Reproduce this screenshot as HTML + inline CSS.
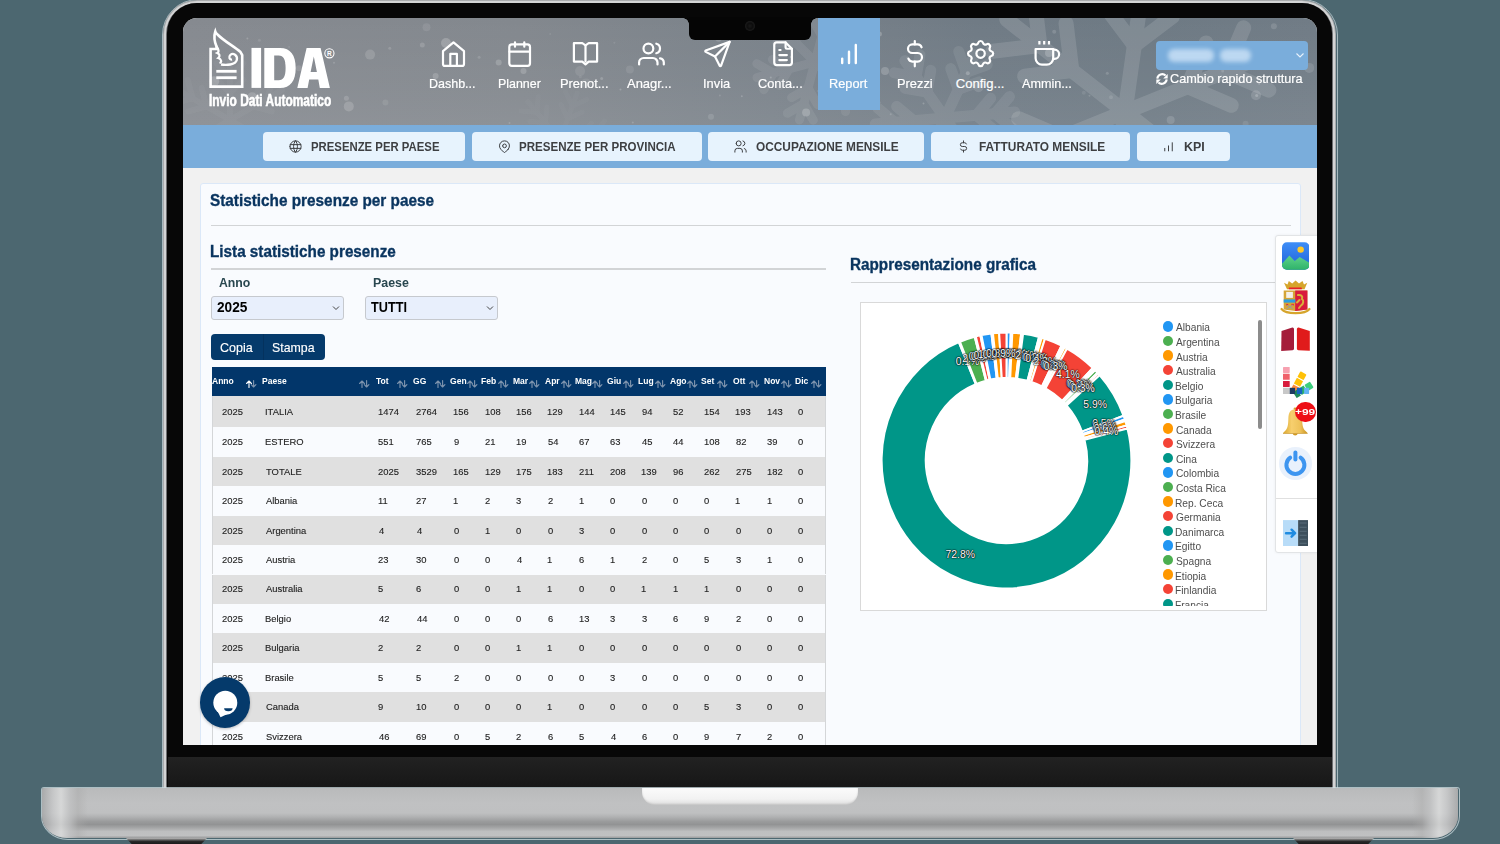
<!DOCTYPE html>
<html><head><meta charset="utf-8">
<style>
*{box-sizing:border-box;margin:0;padding:0}
html,body{width:1500px;height:844px;overflow:hidden}
body{background:#4c6770;position:relative;font-family:"Liberation Sans",sans-serif}
.a{position:absolute}
.t{position:absolute;white-space:nowrap;line-height:1}
</style></head><body>


<div class="a" style="left:161.5px;top:-1.5px;width:1176px;height:792px;border-radius:36px 36px 0 0;border:1px solid rgba(205,220,224,.7)"></div>
<div class="a" style="left:163px;top:0;width:1173px;height:790px;border-radius:34px 34px 0 0;background:#a9abad"></div>
<div class="a" style="left:163.8px;top:0.5px;width:1171.4px;height:790px;border-radius:33px 33px 0 0;background:#d3d4d5"></div>
<div class="a" style="left:166px;top:2.6px;width:1167px;height:790px;border-radius:31px 31px 0 0;background:#6d6e70"></div>
<div class="a" style="left:167px;top:3.4px;width:1165px;height:790px;border-radius:30px 30px 0 0;background:#070707"></div>
<div class="a" style="left:168px;top:757px;width:1164px;height:31px;background:linear-gradient(180deg,#222 0,#1d1d1d 40%,#171717 100%)"></div>


<div class="a" style="left:40.5px;top:786.5px;width:1419px;height:53px;border-radius:3px 3px 27px 27px / 3px 3px 24px 24px;border:1px solid rgba(205,220,224,.75)"></div>
<div class="a" style="left:42px;top:788px;width:1416px;height:50px;border-radius:2px 2px 25px 25px / 2px 2px 22px 22px;
background:linear-gradient(180deg,#b9babb 0,#c0c1c2 30%,#bfc0c1 50%,#b0b1b2 58%,#9a9b9c 67%,#929394 73%,#a6a7a8 80%,#bebfc0 87%,#c0c1c2 95%,#9a9b9c 100%)"></div>
<div class="a" style="left:42px;top:788px;width:1416px;height:50px;border-radius:2px 2px 25px 25px / 2px 2px 22px 22px;
background:linear-gradient(90deg,#a4a5a6 0,#c8c9ca 11px,#dcdddd 19px,#c0c1c2 28px,rgba(170,170,170,.55) 36px,rgba(190,190,190,0) 46px,rgba(190,190,190,0) 1370px,rgba(170,170,170,.55) 1380px,#c0c1c2 1388px,#dcdddd 1397px,#c8c9ca 1405px,#a4a5a6 100%);opacity:.8"></div>
<div class="a" style="left:642px;top:788px;width:216px;height:17px;border-radius:0 0 13px 13px;background:linear-gradient(180deg,#fbfbfb,#f2f2f2 65%,#dcdcdc);box-shadow:inset 0 -1px 2px rgba(0,0,0,.12)"></div>
<div class="a" style="left:126px;top:838px;width:81px;height:6px;background:linear-gradient(180deg,#bdbdbd 0,#5a5a5a 35%,#262626 60%,#1c1c1c);clip-path:polygon(0 0,100% 0,93% 100%,7% 100%)"></div>
<div class="a" style="left:1293px;top:838px;width:81px;height:6px;background:linear-gradient(180deg,#bdbdbd 0,#5a5a5a 35%,#262626 60%,#1c1c1c);clip-path:polygon(0 0,100% 0,93% 100%,7% 100%)"></div>

<div class="a" id="screen" style="left:183px;top:18px;width:1134px;height:727px;overflow:hidden;border-radius:14px 14px 0 0;background:#f1f1f1">
<div class="a" style="left:-183px;top:-18px;width:1500px;height:844px">

<div class="a" style="left:183px;top:18px;width:1134px;height:107px;background:linear-gradient(90deg,#868a90 0%,#83888e 30%,#7a828a 52%,#707b85 70%,#6e7a84 85%,#717c86 100%)"></div>
<div class="a" style="left:183px;top:18px;width:1134px;height:107px;background:linear-gradient(180deg,rgba(255,255,255,0) 0,rgba(255,255,255,.04) 60%,rgba(255,255,255,.08) 100%)"></div>

<svg class="a" style="left:183px;top:18px" width="1134" height="107" viewBox="183 18 1134 107"><g transform="translate(1125,112) rotate(8)" stroke="#fff" opacity="0.12" stroke-width="15" stroke-linecap="round" fill="none"><g transform="rotate(0)"><line x1="0" y1="0" x2="0" y2="-150"/><line x1="0" y1="-67.5" x2="33.60000000000001" y2="-101.10000000000001"/><line x1="0" y1="-67.5" x2="-33.60000000000001" y2="-101.10000000000001"/><line x1="0" y1="-108.0" x2="33.60000000000001" y2="-141.60000000000002"/><line x1="0" y1="-108.0" x2="-33.60000000000001" y2="-141.60000000000002"/></g><g transform="rotate(60)"><line x1="0" y1="0" x2="0" y2="-150"/><line x1="0" y1="-67.5" x2="33.60000000000001" y2="-101.10000000000001"/><line x1="0" y1="-67.5" x2="-33.60000000000001" y2="-101.10000000000001"/><line x1="0" y1="-108.0" x2="33.60000000000001" y2="-141.60000000000002"/><line x1="0" y1="-108.0" x2="-33.60000000000001" y2="-141.60000000000002"/></g><g transform="rotate(120)"><line x1="0" y1="0" x2="0" y2="-150"/><line x1="0" y1="-67.5" x2="33.60000000000001" y2="-101.10000000000001"/><line x1="0" y1="-67.5" x2="-33.60000000000001" y2="-101.10000000000001"/><line x1="0" y1="-108.0" x2="33.60000000000001" y2="-141.60000000000002"/><line x1="0" y1="-108.0" x2="-33.60000000000001" y2="-141.60000000000002"/></g><g transform="rotate(180)"><line x1="0" y1="0" x2="0" y2="-150"/><line x1="0" y1="-67.5" x2="33.60000000000001" y2="-101.10000000000001"/><line x1="0" y1="-67.5" x2="-33.60000000000001" y2="-101.10000000000001"/><line x1="0" y1="-108.0" x2="33.60000000000001" y2="-141.60000000000002"/><line x1="0" y1="-108.0" x2="-33.60000000000001" y2="-141.60000000000002"/></g><g transform="rotate(240)"><line x1="0" y1="0" x2="0" y2="-150"/><line x1="0" y1="-67.5" x2="33.60000000000001" y2="-101.10000000000001"/><line x1="0" y1="-67.5" x2="-33.60000000000001" y2="-101.10000000000001"/><line x1="0" y1="-108.0" x2="33.60000000000001" y2="-141.60000000000002"/><line x1="0" y1="-108.0" x2="-33.60000000000001" y2="-141.60000000000002"/></g><g transform="rotate(300)"><line x1="0" y1="0" x2="0" y2="-150"/><line x1="0" y1="-67.5" x2="33.60000000000001" y2="-101.10000000000001"/><line x1="0" y1="-67.5" x2="-33.60000000000001" y2="-101.10000000000001"/><line x1="0" y1="-108.0" x2="33.60000000000001" y2="-141.60000000000002"/><line x1="0" y1="-108.0" x2="-33.60000000000001" y2="-141.60000000000002"/></g></g><g transform="translate(945,118) rotate(25)" stroke="#fff" opacity="0.08" stroke-width="11" stroke-linecap="round" fill="none"><g transform="rotate(0)"><line x1="0" y1="0" x2="0" y2="-70"/><line x1="0" y1="-31.5" x2="15.680000000000001" y2="-47.18"/><line x1="0" y1="-31.5" x2="-15.680000000000001" y2="-47.18"/><line x1="0" y1="-50.4" x2="15.680000000000001" y2="-66.08"/><line x1="0" y1="-50.4" x2="-15.680000000000001" y2="-66.08"/></g><g transform="rotate(60)"><line x1="0" y1="0" x2="0" y2="-70"/><line x1="0" y1="-31.5" x2="15.680000000000001" y2="-47.18"/><line x1="0" y1="-31.5" x2="-15.680000000000001" y2="-47.18"/><line x1="0" y1="-50.4" x2="15.680000000000001" y2="-66.08"/><line x1="0" y1="-50.4" x2="-15.680000000000001" y2="-66.08"/></g><g transform="rotate(120)"><line x1="0" y1="0" x2="0" y2="-70"/><line x1="0" y1="-31.5" x2="15.680000000000001" y2="-47.18"/><line x1="0" y1="-31.5" x2="-15.680000000000001" y2="-47.18"/><line x1="0" y1="-50.4" x2="15.680000000000001" y2="-66.08"/><line x1="0" y1="-50.4" x2="-15.680000000000001" y2="-66.08"/></g><g transform="rotate(180)"><line x1="0" y1="0" x2="0" y2="-70"/><line x1="0" y1="-31.5" x2="15.680000000000001" y2="-47.18"/><line x1="0" y1="-31.5" x2="-15.680000000000001" y2="-47.18"/><line x1="0" y1="-50.4" x2="15.680000000000001" y2="-66.08"/><line x1="0" y1="-50.4" x2="-15.680000000000001" y2="-66.08"/></g><g transform="rotate(240)"><line x1="0" y1="0" x2="0" y2="-70"/><line x1="0" y1="-31.5" x2="15.680000000000001" y2="-47.18"/><line x1="0" y1="-31.5" x2="-15.680000000000001" y2="-47.18"/><line x1="0" y1="-50.4" x2="15.680000000000001" y2="-66.08"/><line x1="0" y1="-50.4" x2="-15.680000000000001" y2="-66.08"/></g><g transform="rotate(300)"><line x1="0" y1="0" x2="0" y2="-70"/><line x1="0" y1="-31.5" x2="15.680000000000001" y2="-47.18"/><line x1="0" y1="-31.5" x2="-15.680000000000001" y2="-47.18"/><line x1="0" y1="-50.4" x2="15.680000000000001" y2="-66.08"/><line x1="0" y1="-50.4" x2="-15.680000000000001" y2="-66.08"/></g></g><g transform="translate(815,62) rotate(15)" stroke="#fff" opacity="0.07" stroke-width="9" stroke-linecap="round" fill="none"><g transform="rotate(0)"><line x1="0" y1="0" x2="0" y2="-60"/><line x1="0" y1="-27.0" x2="13.440000000000001" y2="-40.44"/><line x1="0" y1="-27.0" x2="-13.440000000000001" y2="-40.44"/><line x1="0" y1="-43.199999999999996" x2="13.440000000000001" y2="-56.64"/><line x1="0" y1="-43.199999999999996" x2="-13.440000000000001" y2="-56.64"/></g><g transform="rotate(60)"><line x1="0" y1="0" x2="0" y2="-60"/><line x1="0" y1="-27.0" x2="13.440000000000001" y2="-40.44"/><line x1="0" y1="-27.0" x2="-13.440000000000001" y2="-40.44"/><line x1="0" y1="-43.199999999999996" x2="13.440000000000001" y2="-56.64"/><line x1="0" y1="-43.199999999999996" x2="-13.440000000000001" y2="-56.64"/></g><g transform="rotate(120)"><line x1="0" y1="0" x2="0" y2="-60"/><line x1="0" y1="-27.0" x2="13.440000000000001" y2="-40.44"/><line x1="0" y1="-27.0" x2="-13.440000000000001" y2="-40.44"/><line x1="0" y1="-43.199999999999996" x2="13.440000000000001" y2="-56.64"/><line x1="0" y1="-43.199999999999996" x2="-13.440000000000001" y2="-56.64"/></g><g transform="rotate(180)"><line x1="0" y1="0" x2="0" y2="-60"/><line x1="0" y1="-27.0" x2="13.440000000000001" y2="-40.44"/><line x1="0" y1="-27.0" x2="-13.440000000000001" y2="-40.44"/><line x1="0" y1="-43.199999999999996" x2="13.440000000000001" y2="-56.64"/><line x1="0" y1="-43.199999999999996" x2="-13.440000000000001" y2="-56.64"/></g><g transform="rotate(240)"><line x1="0" y1="0" x2="0" y2="-60"/><line x1="0" y1="-27.0" x2="13.440000000000001" y2="-40.44"/><line x1="0" y1="-27.0" x2="-13.440000000000001" y2="-40.44"/><line x1="0" y1="-43.199999999999996" x2="13.440000000000001" y2="-56.64"/><line x1="0" y1="-43.199999999999996" x2="-13.440000000000001" y2="-56.64"/></g><g transform="rotate(300)"><line x1="0" y1="0" x2="0" y2="-60"/><line x1="0" y1="-27.0" x2="13.440000000000001" y2="-40.44"/><line x1="0" y1="-27.0" x2="-13.440000000000001" y2="-40.44"/><line x1="0" y1="-43.199999999999996" x2="13.440000000000001" y2="-56.64"/><line x1="0" y1="-43.199999999999996" x2="-13.440000000000001" y2="-56.64"/></g></g><g transform="translate(230,120) rotate(0)" stroke="#fff" opacity="0.03" stroke-width="6" stroke-linecap="round" fill="none"><g transform="rotate(0)"><line x1="0" y1="0" x2="0" y2="-60"/><line x1="0" y1="-27.0" x2="13.440000000000001" y2="-40.44"/><line x1="0" y1="-27.0" x2="-13.440000000000001" y2="-40.44"/><line x1="0" y1="-43.199999999999996" x2="13.440000000000001" y2="-56.64"/><line x1="0" y1="-43.199999999999996" x2="-13.440000000000001" y2="-56.64"/></g><g transform="rotate(60)"><line x1="0" y1="0" x2="0" y2="-60"/><line x1="0" y1="-27.0" x2="13.440000000000001" y2="-40.44"/><line x1="0" y1="-27.0" x2="-13.440000000000001" y2="-40.44"/><line x1="0" y1="-43.199999999999996" x2="13.440000000000001" y2="-56.64"/><line x1="0" y1="-43.199999999999996" x2="-13.440000000000001" y2="-56.64"/></g><g transform="rotate(120)"><line x1="0" y1="0" x2="0" y2="-60"/><line x1="0" y1="-27.0" x2="13.440000000000001" y2="-40.44"/><line x1="0" y1="-27.0" x2="-13.440000000000001" y2="-40.44"/><line x1="0" y1="-43.199999999999996" x2="13.440000000000001" y2="-56.64"/><line x1="0" y1="-43.199999999999996" x2="-13.440000000000001" y2="-56.64"/></g><g transform="rotate(180)"><line x1="0" y1="0" x2="0" y2="-60"/><line x1="0" y1="-27.0" x2="13.440000000000001" y2="-40.44"/><line x1="0" y1="-27.0" x2="-13.440000000000001" y2="-40.44"/><line x1="0" y1="-43.199999999999996" x2="13.440000000000001" y2="-56.64"/><line x1="0" y1="-43.199999999999996" x2="-13.440000000000001" y2="-56.64"/></g><g transform="rotate(240)"><line x1="0" y1="0" x2="0" y2="-60"/><line x1="0" y1="-27.0" x2="13.440000000000001" y2="-40.44"/><line x1="0" y1="-27.0" x2="-13.440000000000001" y2="-40.44"/><line x1="0" y1="-43.199999999999996" x2="13.440000000000001" y2="-56.64"/><line x1="0" y1="-43.199999999999996" x2="-13.440000000000001" y2="-56.64"/></g><g transform="rotate(300)"><line x1="0" y1="0" x2="0" y2="-60"/><line x1="0" y1="-27.0" x2="13.440000000000001" y2="-40.44"/><line x1="0" y1="-27.0" x2="-13.440000000000001" y2="-40.44"/><line x1="0" y1="-43.199999999999996" x2="13.440000000000001" y2="-56.64"/><line x1="0" y1="-43.199999999999996" x2="-13.440000000000001" y2="-56.64"/></g></g><g transform="translate(560,140) rotate(20)" stroke="#fff" opacity="0.025" stroke-width="5" stroke-linecap="round" fill="none"><g transform="rotate(0)"><line x1="0" y1="0" x2="0" y2="-50"/><line x1="0" y1="-22.5" x2="11.200000000000003" y2="-33.7"/><line x1="0" y1="-22.5" x2="-11.200000000000003" y2="-33.7"/><line x1="0" y1="-36.0" x2="11.200000000000003" y2="-47.2"/><line x1="0" y1="-36.0" x2="-11.200000000000003" y2="-47.2"/></g><g transform="rotate(60)"><line x1="0" y1="0" x2="0" y2="-50"/><line x1="0" y1="-22.5" x2="11.200000000000003" y2="-33.7"/><line x1="0" y1="-22.5" x2="-11.200000000000003" y2="-33.7"/><line x1="0" y1="-36.0" x2="11.200000000000003" y2="-47.2"/><line x1="0" y1="-36.0" x2="-11.200000000000003" y2="-47.2"/></g><g transform="rotate(120)"><line x1="0" y1="0" x2="0" y2="-50"/><line x1="0" y1="-22.5" x2="11.200000000000003" y2="-33.7"/><line x1="0" y1="-22.5" x2="-11.200000000000003" y2="-33.7"/><line x1="0" y1="-36.0" x2="11.200000000000003" y2="-47.2"/><line x1="0" y1="-36.0" x2="-11.200000000000003" y2="-47.2"/></g><g transform="rotate(180)"><line x1="0" y1="0" x2="0" y2="-50"/><line x1="0" y1="-22.5" x2="11.200000000000003" y2="-33.7"/><line x1="0" y1="-22.5" x2="-11.200000000000003" y2="-33.7"/><line x1="0" y1="-36.0" x2="11.200000000000003" y2="-47.2"/><line x1="0" y1="-36.0" x2="-11.200000000000003" y2="-47.2"/></g><g transform="rotate(240)"><line x1="0" y1="0" x2="0" y2="-50"/><line x1="0" y1="-22.5" x2="11.200000000000003" y2="-33.7"/><line x1="0" y1="-22.5" x2="-11.200000000000003" y2="-33.7"/><line x1="0" y1="-36.0" x2="11.200000000000003" y2="-47.2"/><line x1="0" y1="-36.0" x2="-11.200000000000003" y2="-47.2"/></g><g transform="rotate(300)"><line x1="0" y1="0" x2="0" y2="-50"/><line x1="0" y1="-22.5" x2="11.200000000000003" y2="-33.7"/><line x1="0" y1="-22.5" x2="-11.200000000000003" y2="-33.7"/><line x1="0" y1="-36.0" x2="11.200000000000003" y2="-47.2"/><line x1="0" y1="-36.0" x2="-11.200000000000003" y2="-47.2"/></g></g><circle cx="550.2" cy="34.1" r="1" fill="rgba(255,255,255,0.09)"/><circle cx="790.7" cy="57.1" r="1" fill="rgba(255,255,255,0.21)"/><circle cx="426.5" cy="27.2" r="4" fill="rgba(255,255,255,0.09)"/><circle cx="285.9" cy="63.4" r="1" fill="rgba(255,255,255,0.21)"/><circle cx="898.1" cy="80.4" r="1" fill="rgba(255,255,255,0.16)"/><circle cx="632.8" cy="122.5" r="1" fill="rgba(255,255,255,0.16)"/><circle cx="334.0" cy="62.8" r="1" fill="rgba(255,255,255,0.16)"/><circle cx="818.3" cy="91.0" r="1" fill="rgba(255,255,255,0.16)"/><circle cx="907.5" cy="57.8" r="1" fill="rgba(255,255,255,0.16)"/><circle cx="885.0" cy="71.1" r="4" fill="rgba(255,255,255,0.19)"/><circle cx="711.0" cy="116.8" r="3" fill="rgba(255,255,255,0.12)"/><circle cx="1083.8" cy="92.8" r="2" fill="rgba(255,255,255,0.09)"/><circle cx="523.5" cy="71.0" r="3" fill="rgba(255,255,255,0.18)"/><circle cx="509.5" cy="122.9" r="1" fill="rgba(255,255,255,0.15)"/><circle cx="370.1" cy="54.6" r="5" fill="rgba(255,255,255,0.14)"/><circle cx="1273.9" cy="26.3" r="3" fill="rgba(255,255,255,0.13)"/><circle cx="580.1" cy="71.1" r="5" fill="rgba(255,255,255,0.09)"/><circle cx="289.1" cy="46.9" r="1" fill="rgba(255,255,255,0.09)"/><circle cx="978.5" cy="87.2" r="5" fill="rgba(255,255,255,0.12)"/><circle cx="620.5" cy="89.5" r="1" fill="rgba(255,255,255,0.21)"/><circle cx="586.1" cy="83.4" r="5" fill="rgba(255,255,255,0.09)"/><circle cx="1054.2" cy="31.8" r="2" fill="rgba(255,255,255,0.14)"/><circle cx="1222.7" cy="71.1" r="1.5" fill="rgba(255,255,255,0.14)"/><circle cx="806.1" cy="112.5" r="4" fill="rgba(255,255,255,0.20)"/><circle cx="498.7" cy="62.4" r="3" fill="rgba(255,255,255,0.18)"/><circle cx="614.4" cy="42.7" r="1" fill="rgba(255,255,255,0.10)"/><circle cx="446.0" cy="43.0" r="5" fill="rgba(255,255,255,0.20)"/><circle cx="389.8" cy="48.2" r="1.5" fill="rgba(255,255,255,0.14)"/><circle cx="601.7" cy="78.6" r="1.5" fill="rgba(255,255,255,0.18)"/><circle cx="767.6" cy="84.1" r="1" fill="rgba(255,255,255,0.14)"/><circle cx="1170.7" cy="119.9" r="4" fill="rgba(255,255,255,0.14)"/><circle cx="629.9" cy="69.5" r="4" fill="rgba(255,255,255,0.09)"/><circle cx="259.4" cy="40.3" r="1.5" fill="rgba(255,255,255,0.10)"/><circle cx="864.2" cy="29.0" r="1.5" fill="rgba(255,255,255,0.16)"/><circle cx="1259.1" cy="83.7" r="1" fill="rgba(255,255,255,0.20)"/><circle cx="879.4" cy="33.9" r="2.5" fill="rgba(255,255,255,0.21)"/><circle cx="866.0" cy="68.7" r="1" fill="rgba(255,255,255,0.20)"/><circle cx="1309.2" cy="67.9" r="5" fill="rgba(255,255,255,0.12)"/><circle cx="346.4" cy="98.2" r="2.5" fill="rgba(255,255,255,0.15)"/><circle cx="967.8" cy="73.2" r="2" fill="rgba(255,255,255,0.21)"/><circle cx="782.0" cy="33.7" r="1" fill="rgba(255,255,255,0.19)"/><circle cx="521.0" cy="86.8" r="1" fill="rgba(255,255,255,0.18)"/><circle cx="479.1" cy="57.2" r="1.5" fill="rgba(255,255,255,0.13)"/><circle cx="435.6" cy="75.9" r="3" fill="rgba(255,255,255,0.17)"/><circle cx="878.4" cy="102.4" r="2" fill="rgba(255,255,255,0.19)"/><circle cx="1111.0" cy="97.2" r="2" fill="rgba(255,255,255,0.11)"/><circle cx="741.8" cy="96.2" r="1" fill="rgba(255,255,255,0.19)"/><circle cx="718.5" cy="38.7" r="3" fill="rgba(255,255,255,0.14)"/><circle cx="1245.6" cy="123.7" r="3" fill="rgba(255,255,255,0.09)"/><circle cx="298.8" cy="68.3" r="3" fill="rgba(255,255,255,0.11)"/><circle cx="890.7" cy="114.3" r="1" fill="rgba(255,255,255,0.15)"/><circle cx="923.5" cy="103.6" r="1" fill="rgba(255,255,255,0.20)"/><circle cx="319.0" cy="59.6" r="2" fill="rgba(255,255,255,0.15)"/><circle cx="385.4" cy="102.4" r="3" fill="rgba(255,255,255,0.09)"/><circle cx="1256.0" cy="95.2" r="5" fill="rgba(255,255,255,0.14)"/><circle cx="1256.7" cy="95.6" r="1.5" fill="rgba(255,255,255,0.22)"/><circle cx="214.2" cy="81.2" r="5" fill="rgba(255,255,255,0.19)"/><circle cx="348.8" cy="106.4" r="5" fill="rgba(255,255,255,0.17)"/><circle cx="580.4" cy="76.7" r="1.5" fill="rgba(255,255,255,0.08)"/><circle cx="1089.5" cy="95.7" r="1" fill="rgba(255,255,255,0.15)"/><circle cx="1241.7" cy="64.4" r="2" fill="rgba(255,255,255,0.20)"/><circle cx="422.3" cy="44.9" r="2.5" fill="rgba(255,255,255,0.15)"/><circle cx="1049.0" cy="52.9" r="4" fill="rgba(255,255,255,0.20)"/><circle cx="252.1" cy="97.2" r="5" fill="rgba(255,255,255,0.17)"/><circle cx="1107.3" cy="73.3" r="1.5" fill="rgba(255,255,255,0.15)"/><circle cx="776.7" cy="20.0" r="5" fill="rgba(255,255,255,0.19)"/><circle cx="873.1" cy="101.0" r="1.5" fill="rgba(255,255,255,0.10)"/><circle cx="719.9" cy="95.6" r="1" fill="rgba(255,255,255,0.13)"/><circle cx="770.8" cy="77.4" r="1" fill="rgba(255,255,255,0.20)"/><circle cx="247.4" cy="38.5" r="1" fill="rgba(255,255,255,0.19)"/></svg>

<svg class="a" style="left:183px;top:18px" width="200" height="107" viewBox="183 18 200 107">
 <g fill="none" stroke="#fff" stroke-width="2.6" stroke-linejoin="miter">
  <path d="M210.6,49 L210.6,86.6 L242.2,86.6 L242.2,55 L240.5,52 C234,46.5 224,41 218,35 C216.2,33.2 215.6,32.5 215.3,31.5 C213.8,36 214.2,41 216.5,46.5 L216.6,49 Z"/>
  <path d="M216.2,46 C218.5,49 219.5,52 217.3,53 C219.5,54 220.6,56 218.2,58 C221,59 222.6,62 219.5,63" stroke-width="2.2"/>
  <path d="M221,64.5 C226,65.5 235.5,65 236.8,60 C238,55 233,52.5 230.3,55 C228.3,57 229.5,60 232,59.5" stroke-width="2.3"/>
 </g>
 <g fill="#fff">
  <rect x="216.3" y="69.9" width="20.3" height="2.8"/>
  <rect x="216.3" y="76.3" width="20.3" height="2.8"/>
  <rect x="251.5" y="47.9" width="9.6" height="40"/>
  <path fill-rule="evenodd" d="M264.3,47.9 H280 C290.5,47.9 295.7,55 295.7,67.9 C295.7,80.8 290.5,87.9 280,87.9 H264.3 Z M274.2,55.6 H278.6 C283.6,55.6 285.6,59.5 285.6,67.9 C285.6,76.3 283.6,80.2 278.6,80.2 H274.2 Z"/>
  <path fill-rule="evenodd" d="M297.3,87.9 L306.6,47.9 H320.6 L329.9,87.9 H319.8 L318.3,79.5 H309.2 L307.6,87.9 Z M310.6,71.9 H316.9 L313.8,56.5 Z"/>
 </g>
 <circle cx="329.4" cy="53.3" r="4.6" fill="none" stroke="#fff" stroke-width="1.1"/>
 <text x="329.4" y="55.9" font-family="Liberation Sans" font-weight="bold" font-size="6.5" fill="#fff" text-anchor="middle">R</text>
</svg>

<div class="t" style="left:208.62px;top:92.00px;font-size:16.23px;font-weight:bold;color:#fff;transform-origin:0 0;transform:scaleX(0.7355);-webkit-text-stroke:0.6px #fff;">Invio Dati Automatico</div>


<div class="a" style="left:818px;top:18px;width:62px;height:91.5px;background:#7aaddb"></div>
<svg class="a" style="left:0;top:0" width="1500" height="130" viewBox="0 0 1500 130" fill="none" stroke="#fff" stroke-width="2.2" stroke-linecap="round" stroke-linejoin="round">
<path d="M443,51.2 L453.5,42.3 L464,51.2 V63.9 a2,2 0 0 1 -2,2 H445 a2,2 0 0 1 -2,-2 Z"/><path d="M450.3,65.6 V53.9 H456.9 V65.6"/>
<rect x="509.3" y="44.3" width="20.7" height="21.6" rx="2.6"/><path d="M515 42.3v4.4M524.3 42.3v4.4M509.5 51.7h20.3"/>
<path d="M573.9,43.2 H582.3 L585.5,45.3 L588.7,43.2 H597.1 V61.6 H588.7 L585.5,64.4 L582.3,61.6 H573.9 Z"/><path d="M585.5,45.5 V61.4"/>
<circle cx="648.4" cy="48.5" r="4.9"/><path d="M639.1,64.4 V62.6 a4.6,4.6 0 0 1 4.6,-4.6 h9.2 a4.6,4.6 0 0 1 4.6,4.6 v1.8"/><path d="M656.3,43.7 a4.9,4.9 0 0 1 0,9.5"/><path d="M660,58.3 a4.4,4.4 0 0 1 3.8,4.3 v1.8"/>
<g transform="translate(701.7,37.9) scale(1.33)" stroke-width="1.65"><path d="M10 14l11 -11"/><path d="M21 3l-6.5 18a.55 .55 0 0 1 -1 0l-3.5 -7l-7 -3.5a.55 .55 0 0 1 0 -1l18 -6.5"/></g>
<g transform="translate(767.96,38.68) scale(1.26)" stroke-width="1.75"><path d="M14 3v4a1 1 0 0 0 1 1h4"/><path d="M17 21h-10a2 2 0 0 1 -2 -2v-14a2 2 0 0 1 2 -2h7l5 5v11a2 2 0 0 1 -2 2z"/><path d="M9 9l1 0"/><path d="M9 13l6 0"/><path d="M9 17l6 0"/></g>
<path d="M842.2,63 V58.6 M849,63 V51.8 M855.8,63 V45" stroke-width="2.4"/>
<path d="M921.6,47.3 a4.3,4.3 0 0 0 -3.9,-2.9 h-5.4 a4.3,4.3 0 0 0 0,8.6 h5.4 a4.3,4.3 0 0 1 0,8.6 h-5.4 a4.3,4.3 0 0 1 -3.9,-2.9"/><path d="M914.8,41.1 v3.3 M914.8,61.6 v4.7"/>
<g transform="translate(963.8,36.8) scale(1.4)" stroke-width="1.57"><path d="M10.325 4.317c.426 -1.756 2.924 -1.756 3.35 0a1.724 1.724 0 0 0 2.573 1.066c1.543 -.94 3.31 .826 2.37 2.37a1.724 1.724 0 0 0 1.065 2.572c1.756 .426 1.756 2.924 0 3.35a1.724 1.724 0 0 0 -1.066 2.573c.94 1.543 -.826 3.31 -2.37 2.37a1.724 1.724 0 0 0 -2.572 1.065c-.426 1.756 -2.924 1.756 -3.35 0a1.724 1.724 0 0 0 -2.573 -1.066c-1.543 .94 -3.31 -.826 -2.37 -2.37a1.724 1.724 0 0 0 -1.065 -2.572c-1.756 -.426 -1.756 -2.924 0 -3.35a1.724 1.724 0 0 0 1.066 -2.573c-.94 -1.543 .826 -3.31 2.37 -2.37c1 .608 2.296 .07 2.572 -1.065z"/><path d="M9 12a3 3 0 1 0 6 0a3 3 0 0 0 -6 0"/></g>
<path d="M1035.6,49 H1053.2 V58.2 a6.4,6.4 0 0 1 -6.4,6.4 h-4.8 a6.4,6.4 0 0 1 -6.4,-6.4 Z"/><path d="M1053.2,49.6 h1.3 a4.6,4.6 0 0 1 0,9.2 h-1.3"/><path d="M1039.4 41v3.6M1044.2 41v3.6M1049 41v3.6" stroke-width="2.2" stroke-linecap="butt"/>
</svg>
<div class="t" style="left:428.80px;top:76.91px;font-size:13.04px;font-weight:normal;color:#fff;transform-origin:0 0;transform:scaleX(0.9589);-webkit-text-stroke:0.2px #fff;">Dashb...</div>
<div class="t" style="left:498.01px;top:76.91px;font-size:13.04px;font-weight:normal;color:#fff;transform-origin:0 0;transform:scaleX(0.9520);-webkit-text-stroke:0.2px #fff;">Planner</div>
<div class="t" style="left:560.17px;top:76.91px;font-size:13.04px;font-weight:normal;color:#fff;transform-origin:0 0;transform:scaleX(0.9847);-webkit-text-stroke:0.2px #fff;">Prenot...</div>
<div class="t" style="left:626.90px;top:76.91px;font-size:13.04px;font-weight:normal;color:#fff;transform-origin:0 0;transform:scaleX(0.9940);-webkit-text-stroke:0.2px #fff;">Anagr...</div>
<div class="t" style="left:703.14px;top:76.91px;font-size:13.04px;font-weight:normal;color:#fff;transform-origin:0 0;transform:scaleX(0.9868);-webkit-text-stroke:0.2px #fff;">Invia</div>
<div class="t" style="left:758.26px;top:76.91px;font-size:13.04px;font-weight:normal;color:#fff;transform-origin:0 0;transform:scaleX(0.9789);-webkit-text-stroke:0.2px #fff;">Conta...</div>
<div class="t" style="left:829.38px;top:76.91px;font-size:13.04px;font-weight:normal;color:#fff;transform-origin:0 0;transform:scaleX(0.9784);-webkit-text-stroke:0.2px #fff;">Report</div>
<div class="t" style="left:896.97px;top:76.91px;font-size:13.04px;font-weight:normal;color:#fff;transform-origin:0 0;transform:scaleX(0.9853);-webkit-text-stroke:0.2px #fff;">Prezzi</div>
<div class="t" style="left:955.85px;top:76.91px;font-size:13.04px;font-weight:normal;color:#fff;transform-origin:0 0;-webkit-text-stroke:0.2px #fff;">Config...</div>
<div class="t" style="left:1022.30px;top:76.91px;font-size:13.04px;font-weight:normal;color:#fff;transform-origin:0 0;transform:scaleX(0.9698);-webkit-text-stroke:0.2px #fff;">Ammin...</div>

<div class="a" style="left:1156px;top:40.6px;width:152px;height:29px;border-radius:4px;background:#7aaddb"></div>
<div class="a" style="left:1168px;top:48.5px;width:46px;height:13px;border-radius:6px;background:rgba(205,226,246,.8);filter:blur(2px)"></div><div class="a" style="left:1220px;top:48.5px;width:31px;height:13px;border-radius:6px;background:rgba(205,226,246,.8);filter:blur(2px)"></div>
<svg class="a" style="left:1295px;top:51px" width="10" height="8" viewBox="0 0 10 8"><path d="M1.5 2.5l3.5 3.5l3.5-3.5" fill="none" stroke="#e8f2fb" stroke-width="1.1"/></svg>
<svg class="a" style="left:1155px;top:72px" width="14" height="14" viewBox="0 0 14 14"><path d="M2.3,6.6 A4.9,4.9 0 0 1 10.6,3.6" stroke="#fff" stroke-width="2.1" fill="none"/><path d="M8.2,6.6 H12.7 V2.1 Z" fill="#fff"/><path d="M11.7,7.4 A4.9,4.9 0 0 1 3.4,10.4" stroke="#fff" stroke-width="2.1" fill="none"/><path d="M5.8,7.4 H1.3 V11.9 Z" fill="#fff"/></svg>

<div class="t" style="left:1170.37px;top:72.31px;font-size:13.04px;font-weight:normal;color:#fff;transform-origin:0 0;transform:scaleX(0.9731);-webkit-text-stroke:0.2px #fff;">Cambio rapido struttura</div>


<div class="a" style="left:183px;top:124.5px;width:1134px;height:43.5px;background:#7aaddb"></div>
<div class="a" style="left:263px;top:132.2px;width:202px;height:28.4px;border-radius:4px;background:#e7f3fd"></div>
<svg class="a" style="left:287.5px;top:139px" width="15" height="15" viewBox="0 0 24 24" fill="none" stroke="#3d3f42" stroke-width="1.6" stroke-linecap="round" stroke-linejoin="round"><path d="M3 12a9 9 0 1 0 18 0a9 9 0 0 0 -18 0"/><path d="M3.6 9h16.8"/><path d="M3.6 15h16.8"/><path d="M11.5 3a17 17 0 0 0 0 18"/><path d="M12.5 3a17 17 0 0 1 0 18"/></svg>
<div class="t" style="left:310.76px;top:139.79px;font-size:13.19px;font-weight:bold;color:#3d3f42;transform-origin:0 0;transform:scaleX(0.8607);">PRESENZE PER PAESE</div>
<div class="a" style="left:472px;top:132.2px;width:230px;height:28.4px;border-radius:4px;background:#e7f3fd"></div>
<svg class="a" style="left:496.5px;top:139px" width="15" height="15" viewBox="0 0 24 24" fill="none" stroke="#3d3f42" stroke-width="1.6" stroke-linecap="round" stroke-linejoin="round"><path d="M9 11a3 3 0 1 0 6 0a3 3 0 0 0 -6 0"/><path d="M17.657 16.657l-4.243 4.243a2 2 0 0 1 -2.827 0l-4.244 -4.243a8 8 0 1 1 11.314 0z"/></svg>
<div class="t" style="left:519.25px;top:139.79px;font-size:13.19px;font-weight:bold;color:#3d3f42;transform-origin:0 0;transform:scaleX(0.8762);">PRESENZE PER PROVINCIA</div>
<div class="a" style="left:708px;top:132.2px;width:216px;height:28.4px;border-radius:4px;background:#e7f3fd"></div>
<svg class="a" style="left:732.5px;top:139px" width="15" height="15" viewBox="0 0 24 24" fill="none" stroke="#3d3f42" stroke-width="1.6" stroke-linecap="round" stroke-linejoin="round"><path d="M5 7a4 4 0 1 0 8 0a4 4 0 1 0 -8 0"/><path d="M3 21v-2a4 4 0 0 1 4 -4h4a4 4 0 0 1 4 4v2"/><path d="M16 3.13a4 4 0 0 1 0 7.75"/><path d="M21 21v-2a4 4 0 0 0 -3 -3.85"/></svg>
<div class="t" style="left:756.43px;top:139.79px;font-size:13.19px;font-weight:bold;color:#3d3f42;transform-origin:0 0;transform:scaleX(0.8990);">OCCUPAZIONE MENSILE</div>
<div class="a" style="left:931px;top:132.2px;width:199px;height:28.4px;border-radius:4px;background:#e7f3fd"></div>
<svg class="a" style="left:955.5px;top:139px" width="15" height="15" viewBox="0 0 24 24" fill="none" stroke="#3d3f42" stroke-width="1.6" stroke-linecap="round" stroke-linejoin="round"><path d="M16.7 8a3 3 0 0 0 -2.7 -2h-4a3 3 0 0 0 0 6h4a3 3 0 0 1 0 6h-4a3 3 0 0 1 -2.7 -2"/><path d="M12 3v3m0 12v3"/></svg>
<div class="t" style="left:978.53px;top:139.79px;font-size:13.19px;font-weight:bold;color:#3d3f42;transform-origin:0 0;transform:scaleX(0.9018);">FATTURATO MENSILE</div>
<div class="a" style="left:1137px;top:132.2px;width:93px;height:28.4px;border-radius:4px;background:#e7f3fd"></div>
<svg class="a" style="left:1160.5px;top:139px" width="15" height="15" viewBox="0 0 24 24" fill="none" stroke="#3d3f42" stroke-width="1.6" stroke-linecap="round" stroke-linejoin="round"><path d="M6 19v-4"/><path d="M12 19v-8"/><path d="M18 19v-13"/></svg>
<div class="t" style="left:1184.09px;top:139.79px;font-size:13.19px;font-weight:bold;color:#3d3f42;transform-origin:0 0;transform:scaleX(0.9435);">KPI</div>
<div class="a" style="left:200px;top:182.5px;width:1101px;height:600px;border-radius:3px;background:#f9fbfe;border:1px solid #dbe8f8"></div>
<div class="t" style="left:210.14px;top:192.08px;font-size:16.38px;font-weight:bold;color:#09345f;transform-origin:0 0;transform:scaleX(0.9367);-webkit-text-stroke:0.35px #09345f;">Statistiche presenze per paese</div>
<div class="a" style="left:211px;top:224.5px;width:1080px;height:1.5px;background:#d2d4d6"></div>
<div class="t" style="left:209.61px;top:243.30px;font-size:16.23px;font-weight:bold;color:#09345f;transform-origin:0 0;transform:scaleX(0.9412);-webkit-text-stroke:0.35px #09345f;">Lista statistiche presenze</div>
<div class="a" style="left:211px;top:268px;width:615px;height:1.5px;background:#d2d4d6"></div>
<div class="t" style="left:850.41px;top:257.45px;font-size:15.94px;font-weight:bold;color:#09345f;transform-origin:0 0;transform:scaleX(0.9589);-webkit-text-stroke:0.35px #09345f;">Rappresentazione grafica</div>
<div class="a" style="left:851px;top:281.7px;width:440px;height:1.5px;background:#d2d4d6"></div>
<div class="t" style="left:219.09px;top:276.31px;font-size:13.04px;font-weight:bold;color:#29474f;transform-origin:0 0;transform:scaleX(0.9422);">Anno</div>
<div class="t" style="left:372.59px;top:276.31px;font-size:13.04px;font-weight:bold;color:#29474f;transform-origin:0 0;transform:scaleX(0.9508);">Paese</div>
<div class="a" style="left:211px;top:296px;width:133.39999999999998px;height:23.6px;border-radius:3px;background:#e8effc;border:1px solid #c6c9ce"></div>
<div class="t" style="left:216.52px;top:300.77px;font-size:13.91px;font-weight:bold;color:#000;transform-origin:0 0;transform:scaleX(0.9827);">2025</div>
<svg class="a" style="left:332.4px;top:304.5px" width="8" height="6" viewBox="0 0 8 6"><path d="M1 1.5l3 3l3-3" fill="none" stroke="#444" stroke-width="1"/></svg>
<div class="a" style="left:365px;top:296px;width:133px;height:23.6px;border-radius:3px;background:#e8effc;border:1px solid #c6c9ce"></div>
<div class="t" style="left:370.87px;top:300.77px;font-size:13.91px;font-weight:bold;color:#000;transform-origin:0 0;transform:scaleX(0.9131);">TUTTI</div>
<svg class="a" style="left:486px;top:304.5px" width="8" height="6" viewBox="0 0 8 6"><path d="M1 1.5l3 3l3-3" fill="none" stroke="#444" stroke-width="1"/></svg>
<div class="a" style="left:211px;top:334px;width:114.4px;height:26.4px;border-radius:4px;background:#053a6b"></div>
<div class="a" style="left:263px;top:334px;width:1px;height:26.4px;background:rgba(0,0,0,.12)"></div>
<div class="t" style="left:220.38px;top:341.02px;font-size:13.62px;font-weight:normal;color:#fff;transform-origin:0 0;transform:scaleX(0.9176);-webkit-text-stroke:0.15px #fff;">Copia</div>
<div class="t" style="left:272.44px;top:341.02px;font-size:13.62px;font-weight:normal;color:#fff;transform-origin:0 0;transform:scaleX(0.9068);-webkit-text-stroke:0.15px #fff;">Stampa</div>
<div class="a" style="left:211.6px;top:366.6px;width:614.4px;height:29.3px;background:#02366a"></div>
<div class="t" style="left:212.39px;top:376.15px;font-size:9.71px;font-weight:bold;color:#fff;transform-origin:0 0;transform:scaleX(0.8791);">Anno</div>
<svg class="a" style="left:246px;top:379.6px" width="11" height="8" viewBox="0 0 11 8" fill="none" stroke-width="1.15" stroke-linecap="round" stroke-linejoin="round"><path d="M3 7.4V1M0.6 3.5L3 1L5.4 3.5" stroke="#ffffff"/><path d="M7.6 0.6V7M5.3 4.6L7.6 7L9.9 4.6" stroke="#7d93ad"/></svg>
<div class="t" style="left:261.85px;top:376.15px;font-size:9.71px;font-weight:bold;color:#fff;transform-origin:0 0;transform:scaleX(0.8791);">Paese</div>
<svg class="a" style="left:359px;top:379.6px" width="11" height="8" viewBox="0 0 11 8" fill="none" stroke-width="1.15" stroke-linecap="round" stroke-linejoin="round"><path d="M3 7.4V1M0.6 3.5L3 1L5.4 3.5" stroke="#7d93ad"/><path d="M7.6 0.6V7M5.3 4.6L7.6 7L9.9 4.6" stroke="#7d93ad"/></svg>
<div class="t" style="left:375.71px;top:376.15px;font-size:9.71px;font-weight:bold;color:#fff;transform-origin:0 0;transform:scaleX(0.8791);">Tot</div>
<svg class="a" style="left:397px;top:379.6px" width="11" height="8" viewBox="0 0 11 8" fill="none" stroke-width="1.15" stroke-linecap="round" stroke-linejoin="round"><path d="M3 7.4V1M0.6 3.5L3 1L5.4 3.5" stroke="#7d93ad"/><path d="M7.6 0.6V7M5.3 4.6L7.6 7L9.9 4.6" stroke="#7d93ad"/></svg>
<div class="t" style="left:412.66px;top:376.15px;font-size:9.71px;font-weight:bold;color:#fff;transform-origin:0 0;transform:scaleX(0.8791);">GG</div>
<svg class="a" style="left:435px;top:379.6px" width="11" height="8" viewBox="0 0 11 8" fill="none" stroke-width="1.15" stroke-linecap="round" stroke-linejoin="round"><path d="M3 7.4V1M0.6 3.5L3 1L5.4 3.5" stroke="#7d93ad"/><path d="M7.6 0.6V7M5.3 4.6L7.6 7L9.9 4.6" stroke="#7d93ad"/></svg>
<div class="t" style="left:450.36px;top:376.15px;font-size:9.71px;font-weight:bold;color:#fff;transform-origin:0 0;transform:scaleX(0.8791);">Gen</div>
<svg class="a" style="left:467px;top:379.6px" width="11" height="8" viewBox="0 0 11 8" fill="none" stroke-width="1.15" stroke-linecap="round" stroke-linejoin="round"><path d="M3 7.4V1M0.6 3.5L3 1L5.4 3.5" stroke="#7d93ad"/><path d="M7.6 0.6V7M5.3 4.6L7.6 7L9.9 4.6" stroke="#7d93ad"/></svg>
<div class="t" style="left:481.45px;top:376.15px;font-size:9.71px;font-weight:bold;color:#fff;transform-origin:0 0;transform:scaleX(0.8791);">Feb</div>
<svg class="a" style="left:498px;top:379.6px" width="11" height="8" viewBox="0 0 11 8" fill="none" stroke-width="1.15" stroke-linecap="round" stroke-linejoin="round"><path d="M3 7.4V1M0.6 3.5L3 1L5.4 3.5" stroke="#7d93ad"/><path d="M7.6 0.6V7M5.3 4.6L7.6 7L9.9 4.6" stroke="#7d93ad"/></svg>
<div class="t" style="left:512.75px;top:376.15px;font-size:9.71px;font-weight:bold;color:#fff;transform-origin:0 0;transform:scaleX(0.8791);">Mar</div>
<svg class="a" style="left:529.3px;top:379.6px" width="11" height="8" viewBox="0 0 11 8" fill="none" stroke-width="1.15" stroke-linecap="round" stroke-linejoin="round"><path d="M3 7.4V1M0.6 3.5L3 1L5.4 3.5" stroke="#7d93ad"/><path d="M7.6 0.6V7M5.3 4.6L7.6 7L9.9 4.6" stroke="#7d93ad"/></svg>
<div class="t" style="left:544.79px;top:376.15px;font-size:9.71px;font-weight:bold;color:#fff;transform-origin:0 0;transform:scaleX(0.8791);">Apr</div>
<svg class="a" style="left:560.7px;top:379.6px" width="11" height="8" viewBox="0 0 11 8" fill="none" stroke-width="1.15" stroke-linecap="round" stroke-linejoin="round"><path d="M3 7.4V1M0.6 3.5L3 1L5.4 3.5" stroke="#7d93ad"/><path d="M7.6 0.6V7M5.3 4.6L7.6 7L9.9 4.6" stroke="#7d93ad"/></svg>
<div class="t" style="left:575.45px;top:376.15px;font-size:9.71px;font-weight:bold;color:#fff;transform-origin:0 0;transform:scaleX(0.8791);">Mag</div>
<svg class="a" style="left:592px;top:379.6px" width="11" height="8" viewBox="0 0 11 8" fill="none" stroke-width="1.15" stroke-linecap="round" stroke-linejoin="round"><path d="M3 7.4V1M0.6 3.5L3 1L5.4 3.5" stroke="#7d93ad"/><path d="M7.6 0.6V7M5.3 4.6L7.6 7L9.9 4.6" stroke="#7d93ad"/></svg>
<div class="t" style="left:607.26px;top:376.15px;font-size:9.71px;font-weight:bold;color:#fff;transform-origin:0 0;transform:scaleX(0.8791);">Giu</div>
<svg class="a" style="left:623.3px;top:379.6px" width="11" height="8" viewBox="0 0 11 8" fill="none" stroke-width="1.15" stroke-linecap="round" stroke-linejoin="round"><path d="M3 7.4V1M0.6 3.5L3 1L5.4 3.5" stroke="#7d93ad"/><path d="M7.6 0.6V7M5.3 4.6L7.6 7L9.9 4.6" stroke="#7d93ad"/></svg>
<div class="t" style="left:638.15px;top:376.15px;font-size:9.71px;font-weight:bold;color:#fff;transform-origin:0 0;transform:scaleX(0.8791);">Lug</div>
<svg class="a" style="left:654.7px;top:379.6px" width="11" height="8" viewBox="0 0 11 8" fill="none" stroke-width="1.15" stroke-linecap="round" stroke-linejoin="round"><path d="M3 7.4V1M0.6 3.5L3 1L5.4 3.5" stroke="#7d93ad"/><path d="M7.6 0.6V7M5.3 4.6L7.6 7L9.9 4.6" stroke="#7d93ad"/></svg>
<div class="t" style="left:670.09px;top:376.15px;font-size:9.71px;font-weight:bold;color:#fff;transform-origin:0 0;transform:scaleX(0.8791);">Ago</div>
<svg class="a" style="left:686.7px;top:379.6px" width="11" height="8" viewBox="0 0 11 8" fill="none" stroke-width="1.15" stroke-linecap="round" stroke-linejoin="round"><path d="M3 7.4V1M0.6 3.5L3 1L5.4 3.5" stroke="#7d93ad"/><path d="M7.6 0.6V7M5.3 4.6L7.6 7L9.9 4.6" stroke="#7d93ad"/></svg>
<div class="t" style="left:701.34px;top:376.15px;font-size:9.71px;font-weight:bold;color:#fff;transform-origin:0 0;transform:scaleX(0.8791);">Set</div>
<svg class="a" style="left:717.3px;top:379.6px" width="11" height="8" viewBox="0 0 11 8" fill="none" stroke-width="1.15" stroke-linecap="round" stroke-linejoin="round"><path d="M3 7.4V1M0.6 3.5L3 1L5.4 3.5" stroke="#7d93ad"/><path d="M7.6 0.6V7M5.3 4.6L7.6 7L9.9 4.6" stroke="#7d93ad"/></svg>
<div class="t" style="left:732.66px;top:376.15px;font-size:9.71px;font-weight:bold;color:#fff;transform-origin:0 0;transform:scaleX(0.8791);">Ott</div>
<svg class="a" style="left:748.7px;top:379.6px" width="11" height="8" viewBox="0 0 11 8" fill="none" stroke-width="1.15" stroke-linecap="round" stroke-linejoin="round"><path d="M3 7.4V1M0.6 3.5L3 1L5.4 3.5" stroke="#7d93ad"/><path d="M7.6 0.6V7M5.3 4.6L7.6 7L9.9 4.6" stroke="#7d93ad"/></svg>
<div class="t" style="left:763.85px;top:376.15px;font-size:9.71px;font-weight:bold;color:#fff;transform-origin:0 0;transform:scaleX(0.8791);">Nov</div>
<svg class="a" style="left:780.7px;top:379.6px" width="11" height="8" viewBox="0 0 11 8" fill="none" stroke-width="1.15" stroke-linecap="round" stroke-linejoin="round"><path d="M3 7.4V1M0.6 3.5L3 1L5.4 3.5" stroke="#7d93ad"/><path d="M7.6 0.6V7M5.3 4.6L7.6 7L9.9 4.6" stroke="#7d93ad"/></svg>
<div class="t" style="left:795.15px;top:376.15px;font-size:9.71px;font-weight:bold;color:#fff;transform-origin:0 0;transform:scaleX(0.8791);">Dic</div>
<svg class="a" style="left:811.3px;top:379.6px" width="11" height="8" viewBox="0 0 11 8" fill="none" stroke-width="1.15" stroke-linecap="round" stroke-linejoin="round"><path d="M3 7.4V1M0.6 3.5L3 1L5.4 3.5" stroke="#7d93ad"/><path d="M7.6 0.6V7M5.3 4.6L7.6 7L9.9 4.6" stroke="#7d93ad"/></svg>
<div class="a" style="left:211.6px;top:395.70px;width:614.4px;height:31.60px;background:#e0e0e0;border-left:1px solid #d4d6d8;border-right:1px solid #d4d6d8"></div>
<div class="t" style="left:221.53px;top:407.45px;font-size:9.70px;font-weight:normal;color:#222;transform-origin:0 0;transform:scaleX(0.9700);-webkit-text-stroke:0.12px #222;">2025</div>
<div class="t" style="left:265.15px;top:407.45px;font-size:9.70px;font-weight:normal;color:#222;transform-origin:0 0;transform:scaleX(0.9700);-webkit-text-stroke:0.12px #222;">ITALIA</div>
<div class="t" style="left:378.09px;top:407.45px;font-size:9.70px;font-weight:normal;color:#222;transform-origin:0 0;transform:scaleX(0.9700);-webkit-text-stroke:0.12px #222;">1474</div>
<div class="t" style="left:416.23px;top:407.45px;font-size:9.70px;font-weight:normal;color:#222;transform-origin:0 0;transform:scaleX(0.9700);-webkit-text-stroke:0.12px #222;">2764</div>
<div class="t" style="left:453.29px;top:407.45px;font-size:9.70px;font-weight:normal;color:#222;transform-origin:0 0;transform:scaleX(0.9700);-webkit-text-stroke:0.12px #222;">156</div>
<div class="t" style="left:484.64px;top:407.45px;font-size:9.70px;font-weight:normal;color:#222;transform-origin:0 0;transform:scaleX(0.9700);-webkit-text-stroke:0.12px #222;">108</div>
<div class="t" style="left:515.99px;top:407.45px;font-size:9.70px;font-weight:normal;color:#222;transform-origin:0 0;transform:scaleX(0.9700);-webkit-text-stroke:0.12px #222;">156</div>
<div class="t" style="left:547.34px;top:407.45px;font-size:9.70px;font-weight:normal;color:#222;transform-origin:0 0;transform:scaleX(0.9700);-webkit-text-stroke:0.12px #222;">129</div>
<div class="t" style="left:578.69px;top:407.45px;font-size:9.70px;font-weight:normal;color:#222;transform-origin:0 0;transform:scaleX(0.9700);-webkit-text-stroke:0.12px #222;">144</div>
<div class="t" style="left:610.04px;top:407.45px;font-size:9.70px;font-weight:normal;color:#222;transform-origin:0 0;transform:scaleX(0.9700);-webkit-text-stroke:0.12px #222;">145</div>
<div class="t" style="left:641.68px;top:407.45px;font-size:9.70px;font-weight:normal;color:#222;transform-origin:0 0;transform:scaleX(0.9700);-webkit-text-stroke:0.12px #222;">94</div>
<div class="t" style="left:673.07px;top:407.45px;font-size:9.70px;font-weight:normal;color:#222;transform-origin:0 0;transform:scaleX(0.9700);-webkit-text-stroke:0.12px #222;">52</div>
<div class="t" style="left:704.09px;top:407.45px;font-size:9.70px;font-weight:normal;color:#222;transform-origin:0 0;transform:scaleX(0.9700);-webkit-text-stroke:0.12px #222;">154</div>
<div class="t" style="left:735.44px;top:407.45px;font-size:9.70px;font-weight:normal;color:#222;transform-origin:0 0;transform:scaleX(0.9700);-webkit-text-stroke:0.12px #222;">193</div>
<div class="t" style="left:766.79px;top:407.45px;font-size:9.70px;font-weight:normal;color:#222;transform-origin:0 0;transform:scaleX(0.9700);-webkit-text-stroke:0.12px #222;">143</div>
<div class="t" style="left:798.47px;top:407.45px;font-size:9.70px;font-weight:normal;color:#222;transform-origin:0 0;transform:scaleX(0.9700);-webkit-text-stroke:0.12px #222;">0</div>
<div class="a" style="left:211.6px;top:427.30px;width:614.4px;height:29.44px;background:#f9fbfe;border-left:1px solid #d4d6d8;border-right:1px solid #d4d6d8"></div>
<div class="t" style="left:221.53px;top:437.23px;font-size:9.70px;font-weight:normal;color:#222;transform-origin:0 0;transform:scaleX(0.9700);-webkit-text-stroke:0.12px #222;">2025</div>
<div class="t" style="left:265.25px;top:437.23px;font-size:9.70px;font-weight:normal;color:#222;transform-origin:0 0;transform:scaleX(0.9700);-webkit-text-stroke:0.12px #222;">ESTERO</div>
<div class="t" style="left:378.42px;top:437.23px;font-size:9.70px;font-weight:normal;color:#222;transform-origin:0 0;transform:scaleX(0.9700);-webkit-text-stroke:0.12px #222;">551</div>
<div class="t" style="left:416.23px;top:437.23px;font-size:9.70px;font-weight:normal;color:#222;transform-origin:0 0;transform:scaleX(0.9700);-webkit-text-stroke:0.12px #222;">765</div>
<div class="t" style="left:453.58px;top:437.23px;font-size:9.70px;font-weight:normal;color:#222;transform-origin:0 0;transform:scaleX(0.9700);-webkit-text-stroke:0.12px #222;">9</div>
<div class="t" style="left:484.88px;top:437.23px;font-size:9.70px;font-weight:normal;color:#222;transform-origin:0 0;transform:scaleX(0.9700);-webkit-text-stroke:0.12px #222;">21</div>
<div class="t" style="left:515.99px;top:437.23px;font-size:9.70px;font-weight:normal;color:#222;transform-origin:0 0;transform:scaleX(0.9700);-webkit-text-stroke:0.12px #222;">19</div>
<div class="t" style="left:547.67px;top:437.23px;font-size:9.70px;font-weight:normal;color:#222;transform-origin:0 0;transform:scaleX(0.9700);-webkit-text-stroke:0.12px #222;">54</div>
<div class="t" style="left:578.93px;top:437.23px;font-size:9.70px;font-weight:normal;color:#222;transform-origin:0 0;transform:scaleX(0.9700);-webkit-text-stroke:0.12px #222;">67</div>
<div class="t" style="left:610.28px;top:437.23px;font-size:9.70px;font-weight:normal;color:#222;transform-origin:0 0;transform:scaleX(0.9700);-webkit-text-stroke:0.12px #222;">63</div>
<div class="t" style="left:641.91px;top:437.23px;font-size:9.70px;font-weight:normal;color:#222;transform-origin:0 0;transform:scaleX(0.9700);-webkit-text-stroke:0.12px #222;">45</div>
<div class="t" style="left:673.26px;top:437.23px;font-size:9.70px;font-weight:normal;color:#222;transform-origin:0 0;transform:scaleX(0.9700);-webkit-text-stroke:0.12px #222;">44</div>
<div class="t" style="left:704.09px;top:437.23px;font-size:9.70px;font-weight:normal;color:#222;transform-origin:0 0;transform:scaleX(0.9700);-webkit-text-stroke:0.12px #222;">108</div>
<div class="t" style="left:735.73px;top:437.23px;font-size:9.70px;font-weight:normal;color:#222;transform-origin:0 0;transform:scaleX(0.9700);-webkit-text-stroke:0.12px #222;">82</div>
<div class="t" style="left:767.12px;top:437.23px;font-size:9.70px;font-weight:normal;color:#222;transform-origin:0 0;transform:scaleX(0.9700);-webkit-text-stroke:0.12px #222;">39</div>
<div class="t" style="left:798.47px;top:437.23px;font-size:9.70px;font-weight:normal;color:#222;transform-origin:0 0;transform:scaleX(0.9700);-webkit-text-stroke:0.12px #222;">0</div>
<div class="a" style="left:211.6px;top:456.74px;width:614.4px;height:29.44px;background:#e0e0e0;border-left:1px solid #d4d6d8;border-right:1px solid #d4d6d8"></div>
<div class="t" style="left:221.53px;top:466.67px;font-size:9.70px;font-weight:normal;color:#222;transform-origin:0 0;transform:scaleX(0.9700);-webkit-text-stroke:0.12px #222;">2025</div>
<div class="t" style="left:265.81px;top:466.67px;font-size:9.70px;font-weight:normal;color:#222;transform-origin:0 0;transform:scaleX(0.9700);-webkit-text-stroke:0.12px #222;">TOTALE</div>
<div class="t" style="left:378.33px;top:466.67px;font-size:9.70px;font-weight:normal;color:#222;transform-origin:0 0;transform:scaleX(0.9700);-webkit-text-stroke:0.12px #222;">2025</div>
<div class="t" style="left:416.32px;top:466.67px;font-size:9.70px;font-weight:normal;color:#222;transform-origin:0 0;transform:scaleX(0.9700);-webkit-text-stroke:0.12px #222;">3529</div>
<div class="t" style="left:453.29px;top:466.67px;font-size:9.70px;font-weight:normal;color:#222;transform-origin:0 0;transform:scaleX(0.9700);-webkit-text-stroke:0.12px #222;">165</div>
<div class="t" style="left:484.64px;top:466.67px;font-size:9.70px;font-weight:normal;color:#222;transform-origin:0 0;transform:scaleX(0.9700);-webkit-text-stroke:0.12px #222;">129</div>
<div class="t" style="left:515.99px;top:466.67px;font-size:9.70px;font-weight:normal;color:#222;transform-origin:0 0;transform:scaleX(0.9700);-webkit-text-stroke:0.12px #222;">175</div>
<div class="t" style="left:547.34px;top:466.67px;font-size:9.70px;font-weight:normal;color:#222;transform-origin:0 0;transform:scaleX(0.9700);-webkit-text-stroke:0.12px #222;">183</div>
<div class="t" style="left:578.93px;top:466.67px;font-size:9.70px;font-weight:normal;color:#222;transform-origin:0 0;transform:scaleX(0.9700);-webkit-text-stroke:0.12px #222;">211</div>
<div class="t" style="left:610.28px;top:466.67px;font-size:9.70px;font-weight:normal;color:#222;transform-origin:0 0;transform:scaleX(0.9700);-webkit-text-stroke:0.12px #222;">208</div>
<div class="t" style="left:641.39px;top:466.67px;font-size:9.70px;font-weight:normal;color:#222;transform-origin:0 0;transform:scaleX(0.9700);-webkit-text-stroke:0.12px #222;">139</div>
<div class="t" style="left:673.03px;top:466.67px;font-size:9.70px;font-weight:normal;color:#222;transform-origin:0 0;transform:scaleX(0.9700);-webkit-text-stroke:0.12px #222;">96</div>
<div class="t" style="left:704.33px;top:466.67px;font-size:9.70px;font-weight:normal;color:#222;transform-origin:0 0;transform:scaleX(0.9700);-webkit-text-stroke:0.12px #222;">262</div>
<div class="t" style="left:735.68px;top:466.67px;font-size:9.70px;font-weight:normal;color:#222;transform-origin:0 0;transform:scaleX(0.9700);-webkit-text-stroke:0.12px #222;">275</div>
<div class="t" style="left:766.79px;top:466.67px;font-size:9.70px;font-weight:normal;color:#222;transform-origin:0 0;transform:scaleX(0.9700);-webkit-text-stroke:0.12px #222;">182</div>
<div class="t" style="left:798.47px;top:466.67px;font-size:9.70px;font-weight:normal;color:#222;transform-origin:0 0;transform:scaleX(0.9700);-webkit-text-stroke:0.12px #222;">0</div>
<div class="a" style="left:211.6px;top:486.18px;width:614.4px;height:29.44px;background:#f9fbfe;border-left:1px solid #d4d6d8;border-right:1px solid #d4d6d8"></div>
<div class="t" style="left:221.53px;top:496.11px;font-size:9.70px;font-weight:normal;color:#222;transform-origin:0 0;transform:scaleX(0.9700);-webkit-text-stroke:0.12px #222;">2025</div>
<div class="t" style="left:266.00px;top:496.11px;font-size:9.70px;font-weight:normal;color:#222;transform-origin:0 0;transform:scaleX(0.9700);-webkit-text-stroke:0.12px #222;">Albania</div>
<div class="t" style="left:378.09px;top:496.11px;font-size:9.70px;font-weight:normal;color:#222;transform-origin:0 0;transform:scaleX(0.9700);-webkit-text-stroke:0.12px #222;">11</div>
<div class="t" style="left:416.23px;top:496.11px;font-size:9.70px;font-weight:normal;color:#222;transform-origin:0 0;transform:scaleX(0.9700);-webkit-text-stroke:0.12px #222;">27</div>
<div class="t" style="left:453.29px;top:496.11px;font-size:9.70px;font-weight:normal;color:#222;transform-origin:0 0;transform:scaleX(0.9700);-webkit-text-stroke:0.12px #222;">1</div>
<div class="t" style="left:484.88px;top:496.11px;font-size:9.70px;font-weight:normal;color:#222;transform-origin:0 0;transform:scaleX(0.9700);-webkit-text-stroke:0.12px #222;">2</div>
<div class="t" style="left:516.32px;top:496.11px;font-size:9.70px;font-weight:normal;color:#222;transform-origin:0 0;transform:scaleX(0.9700);-webkit-text-stroke:0.12px #222;">3</div>
<div class="t" style="left:547.58px;top:496.11px;font-size:9.70px;font-weight:normal;color:#222;transform-origin:0 0;transform:scaleX(0.9700);-webkit-text-stroke:0.12px #222;">2</div>
<div class="t" style="left:578.69px;top:496.11px;font-size:9.70px;font-weight:normal;color:#222;transform-origin:0 0;transform:scaleX(0.9700);-webkit-text-stroke:0.12px #222;">1</div>
<div class="t" style="left:610.37px;top:496.11px;font-size:9.70px;font-weight:normal;color:#222;transform-origin:0 0;transform:scaleX(0.9700);-webkit-text-stroke:0.12px #222;">0</div>
<div class="t" style="left:641.72px;top:496.11px;font-size:9.70px;font-weight:normal;color:#222;transform-origin:0 0;transform:scaleX(0.9700);-webkit-text-stroke:0.12px #222;">0</div>
<div class="t" style="left:673.07px;top:496.11px;font-size:9.70px;font-weight:normal;color:#222;transform-origin:0 0;transform:scaleX(0.9700);-webkit-text-stroke:0.12px #222;">0</div>
<div class="t" style="left:704.42px;top:496.11px;font-size:9.70px;font-weight:normal;color:#222;transform-origin:0 0;transform:scaleX(0.9700);-webkit-text-stroke:0.12px #222;">0</div>
<div class="t" style="left:735.44px;top:496.11px;font-size:9.70px;font-weight:normal;color:#222;transform-origin:0 0;transform:scaleX(0.9700);-webkit-text-stroke:0.12px #222;">1</div>
<div class="t" style="left:766.79px;top:496.11px;font-size:9.70px;font-weight:normal;color:#222;transform-origin:0 0;transform:scaleX(0.9700);-webkit-text-stroke:0.12px #222;">1</div>
<div class="t" style="left:798.47px;top:496.11px;font-size:9.70px;font-weight:normal;color:#222;transform-origin:0 0;transform:scaleX(0.9700);-webkit-text-stroke:0.12px #222;">0</div>
<div class="a" style="left:211.6px;top:515.62px;width:614.4px;height:29.44px;background:#e0e0e0;border-left:1px solid #d4d6d8;border-right:1px solid #d4d6d8"></div>
<div class="t" style="left:221.53px;top:525.55px;font-size:9.70px;font-weight:normal;color:#222;transform-origin:0 0;transform:scaleX(0.9700);-webkit-text-stroke:0.12px #222;">2025</div>
<div class="t" style="left:266.00px;top:525.55px;font-size:9.70px;font-weight:normal;color:#222;transform-origin:0 0;transform:scaleX(0.9700);-webkit-text-stroke:0.12px #222;">Argentina</div>
<div class="t" style="left:378.61px;top:525.55px;font-size:9.70px;font-weight:normal;color:#222;transform-origin:0 0;transform:scaleX(0.9700);-webkit-text-stroke:0.12px #222;">4</div>
<div class="t" style="left:416.51px;top:525.55px;font-size:9.70px;font-weight:normal;color:#222;transform-origin:0 0;transform:scaleX(0.9700);-webkit-text-stroke:0.12px #222;">4</div>
<div class="t" style="left:453.62px;top:525.55px;font-size:9.70px;font-weight:normal;color:#222;transform-origin:0 0;transform:scaleX(0.9700);-webkit-text-stroke:0.12px #222;">0</div>
<div class="t" style="left:484.64px;top:525.55px;font-size:9.70px;font-weight:normal;color:#222;transform-origin:0 0;transform:scaleX(0.9700);-webkit-text-stroke:0.12px #222;">1</div>
<div class="t" style="left:516.32px;top:525.55px;font-size:9.70px;font-weight:normal;color:#222;transform-origin:0 0;transform:scaleX(0.9700);-webkit-text-stroke:0.12px #222;">0</div>
<div class="t" style="left:547.67px;top:525.55px;font-size:9.70px;font-weight:normal;color:#222;transform-origin:0 0;transform:scaleX(0.9700);-webkit-text-stroke:0.12px #222;">0</div>
<div class="t" style="left:579.02px;top:525.55px;font-size:9.70px;font-weight:normal;color:#222;transform-origin:0 0;transform:scaleX(0.9700);-webkit-text-stroke:0.12px #222;">3</div>
<div class="t" style="left:610.37px;top:525.55px;font-size:9.70px;font-weight:normal;color:#222;transform-origin:0 0;transform:scaleX(0.9700);-webkit-text-stroke:0.12px #222;">0</div>
<div class="t" style="left:641.72px;top:525.55px;font-size:9.70px;font-weight:normal;color:#222;transform-origin:0 0;transform:scaleX(0.9700);-webkit-text-stroke:0.12px #222;">0</div>
<div class="t" style="left:673.07px;top:525.55px;font-size:9.70px;font-weight:normal;color:#222;transform-origin:0 0;transform:scaleX(0.9700);-webkit-text-stroke:0.12px #222;">0</div>
<div class="t" style="left:704.42px;top:525.55px;font-size:9.70px;font-weight:normal;color:#222;transform-origin:0 0;transform:scaleX(0.9700);-webkit-text-stroke:0.12px #222;">0</div>
<div class="t" style="left:735.77px;top:525.55px;font-size:9.70px;font-weight:normal;color:#222;transform-origin:0 0;transform:scaleX(0.9700);-webkit-text-stroke:0.12px #222;">0</div>
<div class="t" style="left:767.12px;top:525.55px;font-size:9.70px;font-weight:normal;color:#222;transform-origin:0 0;transform:scaleX(0.9700);-webkit-text-stroke:0.12px #222;">0</div>
<div class="t" style="left:798.47px;top:525.55px;font-size:9.70px;font-weight:normal;color:#222;transform-origin:0 0;transform:scaleX(0.9700);-webkit-text-stroke:0.12px #222;">0</div>
<div class="a" style="left:211.6px;top:545.06px;width:614.4px;height:29.44px;background:#f9fbfe;border-left:1px solid #d4d6d8;border-right:1px solid #d4d6d8"></div>
<div class="t" style="left:221.53px;top:554.99px;font-size:9.70px;font-weight:normal;color:#222;transform-origin:0 0;transform:scaleX(0.9700);-webkit-text-stroke:0.12px #222;">2025</div>
<div class="t" style="left:266.00px;top:554.99px;font-size:9.70px;font-weight:normal;color:#222;transform-origin:0 0;transform:scaleX(0.9700);-webkit-text-stroke:0.12px #222;">Austria</div>
<div class="t" style="left:378.33px;top:554.99px;font-size:9.70px;font-weight:normal;color:#222;transform-origin:0 0;transform:scaleX(0.9700);-webkit-text-stroke:0.12px #222;">23</div>
<div class="t" style="left:416.32px;top:554.99px;font-size:9.70px;font-weight:normal;color:#222;transform-origin:0 0;transform:scaleX(0.9700);-webkit-text-stroke:0.12px #222;">30</div>
<div class="t" style="left:453.62px;top:554.99px;font-size:9.70px;font-weight:normal;color:#222;transform-origin:0 0;transform:scaleX(0.9700);-webkit-text-stroke:0.12px #222;">0</div>
<div class="t" style="left:484.97px;top:554.99px;font-size:9.70px;font-weight:normal;color:#222;transform-origin:0 0;transform:scaleX(0.9700);-webkit-text-stroke:0.12px #222;">0</div>
<div class="t" style="left:516.51px;top:554.99px;font-size:9.70px;font-weight:normal;color:#222;transform-origin:0 0;transform:scaleX(0.9700);-webkit-text-stroke:0.12px #222;">4</div>
<div class="t" style="left:547.34px;top:554.99px;font-size:9.70px;font-weight:normal;color:#222;transform-origin:0 0;transform:scaleX(0.9700);-webkit-text-stroke:0.12px #222;">1</div>
<div class="t" style="left:578.93px;top:554.99px;font-size:9.70px;font-weight:normal;color:#222;transform-origin:0 0;transform:scaleX(0.9700);-webkit-text-stroke:0.12px #222;">6</div>
<div class="t" style="left:610.04px;top:554.99px;font-size:9.70px;font-weight:normal;color:#222;transform-origin:0 0;transform:scaleX(0.9700);-webkit-text-stroke:0.12px #222;">1</div>
<div class="t" style="left:641.63px;top:554.99px;font-size:9.70px;font-weight:normal;color:#222;transform-origin:0 0;transform:scaleX(0.9700);-webkit-text-stroke:0.12px #222;">2</div>
<div class="t" style="left:673.07px;top:554.99px;font-size:9.70px;font-weight:normal;color:#222;transform-origin:0 0;transform:scaleX(0.9700);-webkit-text-stroke:0.12px #222;">0</div>
<div class="t" style="left:704.42px;top:554.99px;font-size:9.70px;font-weight:normal;color:#222;transform-origin:0 0;transform:scaleX(0.9700);-webkit-text-stroke:0.12px #222;">5</div>
<div class="t" style="left:735.77px;top:554.99px;font-size:9.70px;font-weight:normal;color:#222;transform-origin:0 0;transform:scaleX(0.9700);-webkit-text-stroke:0.12px #222;">3</div>
<div class="t" style="left:766.79px;top:554.99px;font-size:9.70px;font-weight:normal;color:#222;transform-origin:0 0;transform:scaleX(0.9700);-webkit-text-stroke:0.12px #222;">1</div>
<div class="t" style="left:798.47px;top:554.99px;font-size:9.70px;font-weight:normal;color:#222;transform-origin:0 0;transform:scaleX(0.9700);-webkit-text-stroke:0.12px #222;">0</div>
<div class="a" style="left:211.6px;top:574.50px;width:614.4px;height:29.44px;background:#e0e0e0;border-left:1px solid #d4d6d8;border-right:1px solid #d4d6d8"></div>
<div class="t" style="left:221.53px;top:584.43px;font-size:9.70px;font-weight:normal;color:#222;transform-origin:0 0;transform:scaleX(0.9700);-webkit-text-stroke:0.12px #222;">2025</div>
<div class="t" style="left:266.00px;top:584.43px;font-size:9.70px;font-weight:normal;color:#222;transform-origin:0 0;transform:scaleX(0.9700);-webkit-text-stroke:0.12px #222;">Australia</div>
<div class="t" style="left:378.42px;top:584.43px;font-size:9.70px;font-weight:normal;color:#222;transform-origin:0 0;transform:scaleX(0.9700);-webkit-text-stroke:0.12px #222;">5</div>
<div class="t" style="left:416.23px;top:584.43px;font-size:9.70px;font-weight:normal;color:#222;transform-origin:0 0;transform:scaleX(0.9700);-webkit-text-stroke:0.12px #222;">6</div>
<div class="t" style="left:453.62px;top:584.43px;font-size:9.70px;font-weight:normal;color:#222;transform-origin:0 0;transform:scaleX(0.9700);-webkit-text-stroke:0.12px #222;">0</div>
<div class="t" style="left:484.97px;top:584.43px;font-size:9.70px;font-weight:normal;color:#222;transform-origin:0 0;transform:scaleX(0.9700);-webkit-text-stroke:0.12px #222;">0</div>
<div class="t" style="left:515.99px;top:584.43px;font-size:9.70px;font-weight:normal;color:#222;transform-origin:0 0;transform:scaleX(0.9700);-webkit-text-stroke:0.12px #222;">1</div>
<div class="t" style="left:547.34px;top:584.43px;font-size:9.70px;font-weight:normal;color:#222;transform-origin:0 0;transform:scaleX(0.9700);-webkit-text-stroke:0.12px #222;">1</div>
<div class="t" style="left:579.02px;top:584.43px;font-size:9.70px;font-weight:normal;color:#222;transform-origin:0 0;transform:scaleX(0.9700);-webkit-text-stroke:0.12px #222;">0</div>
<div class="t" style="left:610.37px;top:584.43px;font-size:9.70px;font-weight:normal;color:#222;transform-origin:0 0;transform:scaleX(0.9700);-webkit-text-stroke:0.12px #222;">0</div>
<div class="t" style="left:641.39px;top:584.43px;font-size:9.70px;font-weight:normal;color:#222;transform-origin:0 0;transform:scaleX(0.9700);-webkit-text-stroke:0.12px #222;">1</div>
<div class="t" style="left:672.74px;top:584.43px;font-size:9.70px;font-weight:normal;color:#222;transform-origin:0 0;transform:scaleX(0.9700);-webkit-text-stroke:0.12px #222;">1</div>
<div class="t" style="left:704.09px;top:584.43px;font-size:9.70px;font-weight:normal;color:#222;transform-origin:0 0;transform:scaleX(0.9700);-webkit-text-stroke:0.12px #222;">1</div>
<div class="t" style="left:735.77px;top:584.43px;font-size:9.70px;font-weight:normal;color:#222;transform-origin:0 0;transform:scaleX(0.9700);-webkit-text-stroke:0.12px #222;">0</div>
<div class="t" style="left:767.12px;top:584.43px;font-size:9.70px;font-weight:normal;color:#222;transform-origin:0 0;transform:scaleX(0.9700);-webkit-text-stroke:0.12px #222;">0</div>
<div class="t" style="left:798.47px;top:584.43px;font-size:9.70px;font-weight:normal;color:#222;transform-origin:0 0;transform:scaleX(0.9700);-webkit-text-stroke:0.12px #222;">0</div>
<div class="a" style="left:211.6px;top:603.94px;width:614.4px;height:29.44px;background:#f9fbfe;border-left:1px solid #d4d6d8;border-right:1px solid #d4d6d8"></div>
<div class="t" style="left:221.53px;top:613.87px;font-size:9.70px;font-weight:normal;color:#222;transform-origin:0 0;transform:scaleX(0.9700);-webkit-text-stroke:0.12px #222;">2025</div>
<div class="t" style="left:265.25px;top:613.87px;font-size:9.70px;font-weight:normal;color:#222;transform-origin:0 0;transform:scaleX(0.9700);-webkit-text-stroke:0.12px #222;">Belgio</div>
<div class="t" style="left:378.61px;top:613.87px;font-size:9.70px;font-weight:normal;color:#222;transform-origin:0 0;transform:scaleX(0.9700);-webkit-text-stroke:0.12px #222;">42</div>
<div class="t" style="left:416.51px;top:613.87px;font-size:9.70px;font-weight:normal;color:#222;transform-origin:0 0;transform:scaleX(0.9700);-webkit-text-stroke:0.12px #222;">44</div>
<div class="t" style="left:453.62px;top:613.87px;font-size:9.70px;font-weight:normal;color:#222;transform-origin:0 0;transform:scaleX(0.9700);-webkit-text-stroke:0.12px #222;">0</div>
<div class="t" style="left:484.97px;top:613.87px;font-size:9.70px;font-weight:normal;color:#222;transform-origin:0 0;transform:scaleX(0.9700);-webkit-text-stroke:0.12px #222;">0</div>
<div class="t" style="left:516.32px;top:613.87px;font-size:9.70px;font-weight:normal;color:#222;transform-origin:0 0;transform:scaleX(0.9700);-webkit-text-stroke:0.12px #222;">0</div>
<div class="t" style="left:547.58px;top:613.87px;font-size:9.70px;font-weight:normal;color:#222;transform-origin:0 0;transform:scaleX(0.9700);-webkit-text-stroke:0.12px #222;">6</div>
<div class="t" style="left:578.69px;top:613.87px;font-size:9.70px;font-weight:normal;color:#222;transform-origin:0 0;transform:scaleX(0.9700);-webkit-text-stroke:0.12px #222;">13</div>
<div class="t" style="left:610.37px;top:613.87px;font-size:9.70px;font-weight:normal;color:#222;transform-origin:0 0;transform:scaleX(0.9700);-webkit-text-stroke:0.12px #222;">3</div>
<div class="t" style="left:641.72px;top:613.87px;font-size:9.70px;font-weight:normal;color:#222;transform-origin:0 0;transform:scaleX(0.9700);-webkit-text-stroke:0.12px #222;">3</div>
<div class="t" style="left:672.98px;top:613.87px;font-size:9.70px;font-weight:normal;color:#222;transform-origin:0 0;transform:scaleX(0.9700);-webkit-text-stroke:0.12px #222;">6</div>
<div class="t" style="left:704.38px;top:613.87px;font-size:9.70px;font-weight:normal;color:#222;transform-origin:0 0;transform:scaleX(0.9700);-webkit-text-stroke:0.12px #222;">9</div>
<div class="t" style="left:735.68px;top:613.87px;font-size:9.70px;font-weight:normal;color:#222;transform-origin:0 0;transform:scaleX(0.9700);-webkit-text-stroke:0.12px #222;">2</div>
<div class="t" style="left:767.12px;top:613.87px;font-size:9.70px;font-weight:normal;color:#222;transform-origin:0 0;transform:scaleX(0.9700);-webkit-text-stroke:0.12px #222;">0</div>
<div class="t" style="left:798.47px;top:613.87px;font-size:9.70px;font-weight:normal;color:#222;transform-origin:0 0;transform:scaleX(0.9700);-webkit-text-stroke:0.12px #222;">0</div>
<div class="a" style="left:211.6px;top:633.38px;width:614.4px;height:29.44px;background:#e0e0e0;border-left:1px solid #d4d6d8;border-right:1px solid #d4d6d8"></div>
<div class="t" style="left:221.53px;top:643.31px;font-size:9.70px;font-weight:normal;color:#222;transform-origin:0 0;transform:scaleX(0.9700);-webkit-text-stroke:0.12px #222;">2025</div>
<div class="t" style="left:265.25px;top:643.31px;font-size:9.70px;font-weight:normal;color:#222;transform-origin:0 0;transform:scaleX(0.9700);-webkit-text-stroke:0.12px #222;">Bulgaria</div>
<div class="t" style="left:378.33px;top:643.31px;font-size:9.70px;font-weight:normal;color:#222;transform-origin:0 0;transform:scaleX(0.9700);-webkit-text-stroke:0.12px #222;">2</div>
<div class="t" style="left:416.23px;top:643.31px;font-size:9.70px;font-weight:normal;color:#222;transform-origin:0 0;transform:scaleX(0.9700);-webkit-text-stroke:0.12px #222;">2</div>
<div class="t" style="left:453.62px;top:643.31px;font-size:9.70px;font-weight:normal;color:#222;transform-origin:0 0;transform:scaleX(0.9700);-webkit-text-stroke:0.12px #222;">0</div>
<div class="t" style="left:484.97px;top:643.31px;font-size:9.70px;font-weight:normal;color:#222;transform-origin:0 0;transform:scaleX(0.9700);-webkit-text-stroke:0.12px #222;">0</div>
<div class="t" style="left:515.99px;top:643.31px;font-size:9.70px;font-weight:normal;color:#222;transform-origin:0 0;transform:scaleX(0.9700);-webkit-text-stroke:0.12px #222;">1</div>
<div class="t" style="left:547.34px;top:643.31px;font-size:9.70px;font-weight:normal;color:#222;transform-origin:0 0;transform:scaleX(0.9700);-webkit-text-stroke:0.12px #222;">1</div>
<div class="t" style="left:579.02px;top:643.31px;font-size:9.70px;font-weight:normal;color:#222;transform-origin:0 0;transform:scaleX(0.9700);-webkit-text-stroke:0.12px #222;">0</div>
<div class="t" style="left:610.37px;top:643.31px;font-size:9.70px;font-weight:normal;color:#222;transform-origin:0 0;transform:scaleX(0.9700);-webkit-text-stroke:0.12px #222;">0</div>
<div class="t" style="left:641.72px;top:643.31px;font-size:9.70px;font-weight:normal;color:#222;transform-origin:0 0;transform:scaleX(0.9700);-webkit-text-stroke:0.12px #222;">0</div>
<div class="t" style="left:673.07px;top:643.31px;font-size:9.70px;font-weight:normal;color:#222;transform-origin:0 0;transform:scaleX(0.9700);-webkit-text-stroke:0.12px #222;">0</div>
<div class="t" style="left:704.42px;top:643.31px;font-size:9.70px;font-weight:normal;color:#222;transform-origin:0 0;transform:scaleX(0.9700);-webkit-text-stroke:0.12px #222;">0</div>
<div class="t" style="left:735.77px;top:643.31px;font-size:9.70px;font-weight:normal;color:#222;transform-origin:0 0;transform:scaleX(0.9700);-webkit-text-stroke:0.12px #222;">0</div>
<div class="t" style="left:767.12px;top:643.31px;font-size:9.70px;font-weight:normal;color:#222;transform-origin:0 0;transform:scaleX(0.9700);-webkit-text-stroke:0.12px #222;">0</div>
<div class="t" style="left:798.47px;top:643.31px;font-size:9.70px;font-weight:normal;color:#222;transform-origin:0 0;transform:scaleX(0.9700);-webkit-text-stroke:0.12px #222;">0</div>
<div class="a" style="left:211.6px;top:662.82px;width:614.4px;height:29.44px;background:#f9fbfe;border-left:1px solid #d4d6d8;border-right:1px solid #d4d6d8"></div>
<div class="t" style="left:221.53px;top:672.75px;font-size:9.70px;font-weight:normal;color:#222;transform-origin:0 0;transform:scaleX(0.9700);-webkit-text-stroke:0.12px #222;">2025</div>
<div class="t" style="left:265.25px;top:672.75px;font-size:9.70px;font-weight:normal;color:#222;transform-origin:0 0;transform:scaleX(0.9700);-webkit-text-stroke:0.12px #222;">Brasile</div>
<div class="t" style="left:378.42px;top:672.75px;font-size:9.70px;font-weight:normal;color:#222;transform-origin:0 0;transform:scaleX(0.9700);-webkit-text-stroke:0.12px #222;">5</div>
<div class="t" style="left:416.32px;top:672.75px;font-size:9.70px;font-weight:normal;color:#222;transform-origin:0 0;transform:scaleX(0.9700);-webkit-text-stroke:0.12px #222;">5</div>
<div class="t" style="left:453.53px;top:672.75px;font-size:9.70px;font-weight:normal;color:#222;transform-origin:0 0;transform:scaleX(0.9700);-webkit-text-stroke:0.12px #222;">2</div>
<div class="t" style="left:484.97px;top:672.75px;font-size:9.70px;font-weight:normal;color:#222;transform-origin:0 0;transform:scaleX(0.9700);-webkit-text-stroke:0.12px #222;">0</div>
<div class="t" style="left:516.32px;top:672.75px;font-size:9.70px;font-weight:normal;color:#222;transform-origin:0 0;transform:scaleX(0.9700);-webkit-text-stroke:0.12px #222;">0</div>
<div class="t" style="left:547.67px;top:672.75px;font-size:9.70px;font-weight:normal;color:#222;transform-origin:0 0;transform:scaleX(0.9700);-webkit-text-stroke:0.12px #222;">0</div>
<div class="t" style="left:579.02px;top:672.75px;font-size:9.70px;font-weight:normal;color:#222;transform-origin:0 0;transform:scaleX(0.9700);-webkit-text-stroke:0.12px #222;">0</div>
<div class="t" style="left:610.37px;top:672.75px;font-size:9.70px;font-weight:normal;color:#222;transform-origin:0 0;transform:scaleX(0.9700);-webkit-text-stroke:0.12px #222;">3</div>
<div class="t" style="left:641.72px;top:672.75px;font-size:9.70px;font-weight:normal;color:#222;transform-origin:0 0;transform:scaleX(0.9700);-webkit-text-stroke:0.12px #222;">0</div>
<div class="t" style="left:673.07px;top:672.75px;font-size:9.70px;font-weight:normal;color:#222;transform-origin:0 0;transform:scaleX(0.9700);-webkit-text-stroke:0.12px #222;">0</div>
<div class="t" style="left:704.42px;top:672.75px;font-size:9.70px;font-weight:normal;color:#222;transform-origin:0 0;transform:scaleX(0.9700);-webkit-text-stroke:0.12px #222;">0</div>
<div class="t" style="left:735.77px;top:672.75px;font-size:9.70px;font-weight:normal;color:#222;transform-origin:0 0;transform:scaleX(0.9700);-webkit-text-stroke:0.12px #222;">0</div>
<div class="t" style="left:767.12px;top:672.75px;font-size:9.70px;font-weight:normal;color:#222;transform-origin:0 0;transform:scaleX(0.9700);-webkit-text-stroke:0.12px #222;">0</div>
<div class="t" style="left:798.47px;top:672.75px;font-size:9.70px;font-weight:normal;color:#222;transform-origin:0 0;transform:scaleX(0.9700);-webkit-text-stroke:0.12px #222;">0</div>
<div class="a" style="left:211.6px;top:692.26px;width:614.4px;height:29.44px;background:#e0e0e0;border-left:1px solid #d4d6d8;border-right:1px solid #d4d6d8"></div>
<div class="t" style="left:221.53px;top:702.19px;font-size:9.70px;font-weight:normal;color:#222;transform-origin:0 0;transform:scaleX(0.9700);-webkit-text-stroke:0.12px #222;">2025</div>
<div class="t" style="left:265.53px;top:702.19px;font-size:9.70px;font-weight:normal;color:#222;transform-origin:0 0;transform:scaleX(0.9700);-webkit-text-stroke:0.12px #222;">Canada</div>
<div class="t" style="left:378.38px;top:702.19px;font-size:9.70px;font-weight:normal;color:#222;transform-origin:0 0;transform:scaleX(0.9700);-webkit-text-stroke:0.12px #222;">9</div>
<div class="t" style="left:415.99px;top:702.19px;font-size:9.70px;font-weight:normal;color:#222;transform-origin:0 0;transform:scaleX(0.9700);-webkit-text-stroke:0.12px #222;">10</div>
<div class="t" style="left:453.62px;top:702.19px;font-size:9.70px;font-weight:normal;color:#222;transform-origin:0 0;transform:scaleX(0.9700);-webkit-text-stroke:0.12px #222;">0</div>
<div class="t" style="left:484.97px;top:702.19px;font-size:9.70px;font-weight:normal;color:#222;transform-origin:0 0;transform:scaleX(0.9700);-webkit-text-stroke:0.12px #222;">0</div>
<div class="t" style="left:516.32px;top:702.19px;font-size:9.70px;font-weight:normal;color:#222;transform-origin:0 0;transform:scaleX(0.9700);-webkit-text-stroke:0.12px #222;">0</div>
<div class="t" style="left:547.34px;top:702.19px;font-size:9.70px;font-weight:normal;color:#222;transform-origin:0 0;transform:scaleX(0.9700);-webkit-text-stroke:0.12px #222;">1</div>
<div class="t" style="left:579.02px;top:702.19px;font-size:9.70px;font-weight:normal;color:#222;transform-origin:0 0;transform:scaleX(0.9700);-webkit-text-stroke:0.12px #222;">0</div>
<div class="t" style="left:610.37px;top:702.19px;font-size:9.70px;font-weight:normal;color:#222;transform-origin:0 0;transform:scaleX(0.9700);-webkit-text-stroke:0.12px #222;">0</div>
<div class="t" style="left:641.72px;top:702.19px;font-size:9.70px;font-weight:normal;color:#222;transform-origin:0 0;transform:scaleX(0.9700);-webkit-text-stroke:0.12px #222;">0</div>
<div class="t" style="left:673.07px;top:702.19px;font-size:9.70px;font-weight:normal;color:#222;transform-origin:0 0;transform:scaleX(0.9700);-webkit-text-stroke:0.12px #222;">0</div>
<div class="t" style="left:704.42px;top:702.19px;font-size:9.70px;font-weight:normal;color:#222;transform-origin:0 0;transform:scaleX(0.9700);-webkit-text-stroke:0.12px #222;">5</div>
<div class="t" style="left:735.77px;top:702.19px;font-size:9.70px;font-weight:normal;color:#222;transform-origin:0 0;transform:scaleX(0.9700);-webkit-text-stroke:0.12px #222;">3</div>
<div class="t" style="left:767.12px;top:702.19px;font-size:9.70px;font-weight:normal;color:#222;transform-origin:0 0;transform:scaleX(0.9700);-webkit-text-stroke:0.12px #222;">0</div>
<div class="t" style="left:798.47px;top:702.19px;font-size:9.70px;font-weight:normal;color:#222;transform-origin:0 0;transform:scaleX(0.9700);-webkit-text-stroke:0.12px #222;">0</div>
<div class="a" style="left:211.6px;top:721.70px;width:614.4px;height:29.44px;background:#f9fbfe;border-left:1px solid #d4d6d8;border-right:1px solid #d4d6d8"></div>
<div class="t" style="left:221.53px;top:731.63px;font-size:9.70px;font-weight:normal;color:#222;transform-origin:0 0;transform:scaleX(0.9700);-webkit-text-stroke:0.12px #222;">2025</div>
<div class="t" style="left:265.58px;top:731.63px;font-size:9.70px;font-weight:normal;color:#222;transform-origin:0 0;transform:scaleX(0.9700);-webkit-text-stroke:0.12px #222;">Svizzera</div>
<div class="t" style="left:378.61px;top:731.63px;font-size:9.70px;font-weight:normal;color:#222;transform-origin:0 0;transform:scaleX(0.9700);-webkit-text-stroke:0.12px #222;">46</div>
<div class="t" style="left:416.23px;top:731.63px;font-size:9.70px;font-weight:normal;color:#222;transform-origin:0 0;transform:scaleX(0.9700);-webkit-text-stroke:0.12px #222;">69</div>
<div class="t" style="left:453.62px;top:731.63px;font-size:9.70px;font-weight:normal;color:#222;transform-origin:0 0;transform:scaleX(0.9700);-webkit-text-stroke:0.12px #222;">0</div>
<div class="t" style="left:484.97px;top:731.63px;font-size:9.70px;font-weight:normal;color:#222;transform-origin:0 0;transform:scaleX(0.9700);-webkit-text-stroke:0.12px #222;">5</div>
<div class="t" style="left:516.23px;top:731.63px;font-size:9.70px;font-weight:normal;color:#222;transform-origin:0 0;transform:scaleX(0.9700);-webkit-text-stroke:0.12px #222;">2</div>
<div class="t" style="left:547.58px;top:731.63px;font-size:9.70px;font-weight:normal;color:#222;transform-origin:0 0;transform:scaleX(0.9700);-webkit-text-stroke:0.12px #222;">6</div>
<div class="t" style="left:579.02px;top:731.63px;font-size:9.70px;font-weight:normal;color:#222;transform-origin:0 0;transform:scaleX(0.9700);-webkit-text-stroke:0.12px #222;">5</div>
<div class="t" style="left:610.56px;top:731.63px;font-size:9.70px;font-weight:normal;color:#222;transform-origin:0 0;transform:scaleX(0.9700);-webkit-text-stroke:0.12px #222;">4</div>
<div class="t" style="left:641.63px;top:731.63px;font-size:9.70px;font-weight:normal;color:#222;transform-origin:0 0;transform:scaleX(0.9700);-webkit-text-stroke:0.12px #222;">6</div>
<div class="t" style="left:673.07px;top:731.63px;font-size:9.70px;font-weight:normal;color:#222;transform-origin:0 0;transform:scaleX(0.9700);-webkit-text-stroke:0.12px #222;">0</div>
<div class="t" style="left:704.38px;top:731.63px;font-size:9.70px;font-weight:normal;color:#222;transform-origin:0 0;transform:scaleX(0.9700);-webkit-text-stroke:0.12px #222;">9</div>
<div class="t" style="left:735.68px;top:731.63px;font-size:9.70px;font-weight:normal;color:#222;transform-origin:0 0;transform:scaleX(0.9700);-webkit-text-stroke:0.12px #222;">7</div>
<div class="t" style="left:767.03px;top:731.63px;font-size:9.70px;font-weight:normal;color:#222;transform-origin:0 0;transform:scaleX(0.9700);-webkit-text-stroke:0.12px #222;">2</div>
<div class="t" style="left:798.47px;top:731.63px;font-size:9.70px;font-weight:normal;color:#222;transform-origin:0 0;transform:scaleX(0.9700);-webkit-text-stroke:0.12px #222;">0</div>
<div class="a" style="left:860px;top:301.6px;width:407.3px;height:309.4px;background:#fff;border:1.6px solid #d9d9d9"></div>
<svg class="a" style="left:0;top:0" width="1500" height="844" viewBox="0 0 1500 844"><path d="M1006.50,332.54 A124.9,127.96 0 0 1 1010.76,332.61 L1009.25,377.97 A80.6,82.57 0 0 0 1006.50,377.93 Z" fill="#2196f3" stroke="#fff" stroke-width="2" stroke-linejoin="miter"/><path d="M1010.76,332.61 A124.9,127.96 0 0 1 1012.31,332.68 L1010.25,378.01 A80.6,82.57 0 0 0 1009.25,377.97 Z" fill="#4caf50" stroke="#fff" stroke-width="2" stroke-linejoin="miter"/><path d="M1012.31,332.68 A124.9,127.96 0 0 1 1021.19,333.43 L1015.98,378.50 A80.6,82.57 0 0 0 1010.25,378.01 Z" fill="#ff9800" stroke="#fff" stroke-width="2" stroke-linejoin="miter"/><path d="M1021.19,333.43 A124.9,127.96 0 0 1 1023.11,333.68 L1017.22,378.66 A80.6,82.57 0 0 0 1015.98,378.50 Z" fill="#f44336" stroke="#fff" stroke-width="2" stroke-linejoin="miter"/><path d="M1023.11,333.68 A124.9,127.96 0 0 1 1039.06,336.96 L1027.51,380.78 A80.6,82.57 0 0 0 1017.22,378.66 Z" fill="#009688" stroke="#fff" stroke-width="2" stroke-linejoin="miter"/><path d="M1039.06,336.96 A124.9,127.96 0 0 1 1039.81,337.17 L1027.99,380.92 A80.6,82.57 0 0 0 1027.51,380.78 Z" fill="#2196f3" stroke="#fff" stroke-width="2" stroke-linejoin="miter"/><path d="M1039.81,337.17 A124.9,127.96 0 0 1 1041.67,337.72 L1029.20,381.27 A80.6,82.57 0 0 0 1027.99,380.92 Z" fill="#4caf50" stroke="#fff" stroke-width="2" stroke-linejoin="miter"/><path d="M1041.67,337.72 A124.9,127.96 0 0 1 1045.00,338.77 L1031.35,381.95 A80.6,82.57 0 0 0 1029.20,381.27 Z" fill="#ff9800" stroke="#fff" stroke-width="2" stroke-linejoin="miter"/><path d="M1045.00,338.77 A124.9,127.96 0 0 1 1061.51,345.62 L1042.00,386.37 A80.6,82.57 0 0 0 1031.35,381.95 Z" fill="#f44336" stroke="#fff" stroke-width="2" stroke-linejoin="miter"/><path d="M1061.51,345.62 A124.9,127.96 0 0 1 1062.90,346.33 L1042.90,386.82 A80.6,82.57 0 0 0 1042.00,386.37 Z" fill="#009688" stroke="#fff" stroke-width="2" stroke-linejoin="miter"/><path d="M1062.90,346.33 A124.9,127.96 0 0 1 1063.94,346.87 L1043.56,387.17 A80.6,82.57 0 0 0 1042.90,386.82 Z" fill="#2196f3" stroke="#fff" stroke-width="2" stroke-linejoin="miter"/><path d="M1063.94,346.87 A124.9,127.96 0 0 1 1064.62,347.24 L1044.01,387.41 A80.6,82.57 0 0 0 1043.56,387.17 Z" fill="#4caf50" stroke="#fff" stroke-width="2" stroke-linejoin="miter"/><path d="M1064.62,347.24 A124.9,127.96 0 0 1 1067.01,348.56 L1045.55,388.26 A80.6,82.57 0 0 0 1044.01,387.41 Z" fill="#ff9800" stroke="#fff" stroke-width="2" stroke-linejoin="miter"/><path d="M1067.01,348.56 A124.9,127.96 0 0 1 1092.84,368.04 L1062.22,400.83 A80.6,82.57 0 0 0 1045.55,388.26 Z" fill="#f44336" stroke="#fff" stroke-width="2" stroke-linejoin="miter"/><path d="M1092.84,368.04 A124.9,127.96 0 0 1 1093.68,368.87 L1062.76,401.37 A80.6,82.57 0 0 0 1062.22,400.83 Z" fill="#009688" stroke="#fff" stroke-width="2" stroke-linejoin="miter"/><path d="M1093.68,368.87 A124.9,127.96 0 0 1 1095.06,370.26 L1063.65,402.27 A80.6,82.57 0 0 0 1062.76,401.37 Z" fill="#2196f3" stroke="#fff" stroke-width="2" stroke-linejoin="miter"/><path d="M1095.06,370.26 A124.9,127.96 0 0 1 1097.48,372.83 L1065.21,403.93 A80.6,82.57 0 0 0 1063.65,402.27 Z" fill="#4caf50" stroke="#fff" stroke-width="2" stroke-linejoin="miter"/><path d="M1097.48,372.83 A124.9,127.96 0 0 1 1098.01,373.41 L1065.55,404.30 A80.6,82.57 0 0 0 1065.21,403.93 Z" fill="#ff9800" stroke="#fff" stroke-width="2" stroke-linejoin="miter"/><path d="M1098.01,373.41 A124.9,127.96 0 0 1 1099.58,375.17 L1066.56,405.44 A80.6,82.57 0 0 0 1065.55,404.30 Z" fill="#f44336" stroke="#fff" stroke-width="2" stroke-linejoin="miter"/><path d="M1099.58,375.17 A124.9,127.96 0 0 1 1123.50,415.71 L1082.00,431.60 A80.6,82.57 0 0 0 1066.56,405.44 Z" fill="#009688" stroke="#fff" stroke-width="2" stroke-linejoin="miter"/><path d="M1123.50,415.71 A124.9,127.96 0 0 1 1124.80,419.45 L1082.84,434.01 A80.6,82.57 0 0 0 1082.00,431.60 Z" fill="#2196f3" stroke="#fff" stroke-width="2" stroke-linejoin="miter"/><path d="M1124.80,419.45 A124.9,127.96 0 0 1 1125.29,420.96 L1083.16,434.98 A80.6,82.57 0 0 0 1082.84,434.01 Z" fill="#4caf50" stroke="#fff" stroke-width="2" stroke-linejoin="miter"/><path d="M1125.29,420.96 A124.9,127.96 0 0 1 1126.64,425.52 L1084.03,437.92 A80.6,82.57 0 0 0 1083.16,434.98 Z" fill="#ff9800" stroke="#fff" stroke-width="2" stroke-linejoin="miter"/><path d="M1126.64,425.52 A124.9,127.96 0 0 1 1127.45,428.58 L1084.55,439.90 A80.6,82.57 0 0 0 1084.03,437.92 Z" fill="#f44336" stroke="#fff" stroke-width="2" stroke-linejoin="miter"/><path d="M1127.45,428.58 A124.9,127.96 0 1 1 958.90,342.20 L975.79,384.16 A80.6,82.57 0 1 0 1084.55,439.90 Z" fill="#009688" stroke="#fff" stroke-width="2" stroke-linejoin="miter"/><path d="M958.90,342.20 A124.9,127.96 0 0 1 959.98,341.75 L976.48,383.87 A80.6,82.57 0 0 0 975.79,384.16 Z" fill="#2196f3" stroke="#fff" stroke-width="2" stroke-linejoin="miter"/><path d="M959.98,341.75 A124.9,127.96 0 0 1 974.69,336.76 L985.97,380.65 A80.6,82.57 0 0 0 976.48,383.87 Z" fill="#4caf50" stroke="#fff" stroke-width="2" stroke-linejoin="miter"/><path d="M974.69,336.76 A124.9,127.96 0 0 1 975.81,336.46 L986.70,380.46 A80.6,82.57 0 0 0 985.97,380.65 Z" fill="#ff9800" stroke="#fff" stroke-width="2" stroke-linejoin="miter"/><path d="M975.81,336.46 A124.9,127.96 0 0 1 980.34,335.38 L989.62,379.76 A80.6,82.57 0 0 0 986.70,380.46 Z" fill="#f44336" stroke="#fff" stroke-width="2" stroke-linejoin="miter"/><path d="M980.34,335.38 A124.9,127.96 0 0 1 981.48,335.13 L990.35,379.60 A80.6,82.57 0 0 0 989.62,379.76 Z" fill="#009688" stroke="#fff" stroke-width="2" stroke-linejoin="miter"/><path d="M981.48,335.13 A124.9,127.96 0 0 1 991.42,333.48 L996.77,378.53 A80.6,82.57 0 0 0 990.35,379.60 Z" fill="#2196f3" stroke="#fff" stroke-width="2" stroke-linejoin="miter"/><path d="M991.42,333.48 A124.9,127.96 0 0 1 992.96,333.29 L997.76,378.41 A80.6,82.57 0 0 0 996.77,378.53 Z" fill="#4caf50" stroke="#fff" stroke-width="2" stroke-linejoin="miter"/><path d="M992.96,333.29 A124.9,127.96 0 0 1 999.14,332.76 L1001.75,378.07 A80.6,82.57 0 0 0 997.76,378.41 Z" fill="#ff9800" stroke="#fff" stroke-width="2" stroke-linejoin="miter"/><path d="M999.14,332.76 A124.9,127.96 0 0 1 1006.50,332.54 L1006.50,377.93 A80.6,82.57 0 0 0 1001.75,378.07 Z" fill="#f44336" stroke="#fff" stroke-width="2" stroke-linejoin="miter"/></svg>
<div class="t" style="left:978.3px;top:349.0px;width:60px;text-align:center;font-size:10.4px;color:#fff;text-shadow:0 0 1px #000,0 0 1px #000,0 0 2px #000">0.5%</div>
<div class="t" style="left:980.7px;top:349.1px;width:60px;text-align:center;font-size:10.4px;color:#fff;text-shadow:0 0 1px #000,0 0 1px #000,0 0 2px #000">0.2%</div>
<div class="t" style="left:985.0px;top:349.3px;width:60px;text-align:center;font-size:10.4px;color:#fff;text-shadow:0 0 1px #000,0 0 1px #000,0 0 2px #000">1.1%</div>
<div class="t" style="left:989.5px;top:349.8px;width:60px;text-align:center;font-size:10.4px;color:#fff;text-shadow:0 0 1px #000,0 0 1px #000,0 0 2px #000">0.2%</div>
<div class="t" style="left:996.9px;top:351.0px;width:60px;text-align:center;font-size:10.4px;color:#fff;text-shadow:0 0 1px #000,0 0 1px #000,0 0 2px #000">2.1%</div>
<div class="t" style="left:1003.8px;top:352.7px;width:60px;text-align:center;font-size:10.4px;color:#fff;text-shadow:0 0 1px #000,0 0 1px #000,0 0 2px #000">0.1%</div>
<div class="t" style="left:1004.9px;top:353.0px;width:60px;text-align:center;font-size:10.4px;color:#fff;text-shadow:0 0 1px #000,0 0 1px #000,0 0 2px #000">0.2%</div>
<div class="t" style="left:1007.0px;top:353.7px;width:60px;text-align:center;font-size:10.4px;color:#fff;text-shadow:0 0 1px #000,0 0 1px #000,0 0 2px #000">0.4%</div>
<div class="t" style="left:1015.3px;top:356.7px;width:60px;text-align:center;font-size:10.4px;color:#fff;text-shadow:0 0 1px #000,0 0 1px #000,0 0 2px #000">2.3%</div>
<div class="t" style="left:1022.7px;top:360.1px;width:60px;text-align:center;font-size:10.4px;color:#fff;text-shadow:0 0 1px #000,0 0 1px #000,0 0 2px #000">0.2%</div>
<div class="t" style="left:1023.7px;top:360.6px;width:60px;text-align:center;font-size:10.4px;color:#fff;text-shadow:0 0 1px #000,0 0 1px #000,0 0 2px #000">0.1%</div>
<div class="t" style="left:1024.4px;top:361.0px;width:60px;text-align:center;font-size:10.4px;color:#fff;text-shadow:0 0 1px #000,0 0 1px #000,0 0 2px #000">0.1%</div>
<div class="t" style="left:1025.7px;top:361.7px;width:60px;text-align:center;font-size:10.4px;color:#fff;text-shadow:0 0 1px #000,0 0 1px #000,0 0 2px #000">0.3%</div>
<div class="t" style="left:1037.9px;top:369.6px;width:60px;text-align:center;font-size:10.4px;color:#fff;text-shadow:0 0 1px #000,0 0 1px #000,0 0 2px #000">4.1%</div>
<div class="t" style="left:1048.4px;top:378.7px;width:60px;text-align:center;font-size:10.4px;color:#fff;text-shadow:0 0 1px #000,0 0 1px #000,0 0 2px #000">0.1%</div>
<div class="t" style="left:1049.3px;top:379.6px;width:60px;text-align:center;font-size:10.4px;color:#fff;text-shadow:0 0 1px #000,0 0 1px #000,0 0 2px #000">0.2%</div>
<div class="t" style="left:1050.9px;top:381.3px;width:60px;text-align:center;font-size:10.4px;color:#fff;text-shadow:0 0 1px #000,0 0 1px #000,0 0 2px #000">0.4%</div>
<div class="t" style="left:1052.1px;top:382.6px;width:60px;text-align:center;font-size:10.4px;color:#fff;text-shadow:0 0 1px #000,0 0 1px #000,0 0 2px #000">0.1%</div>
<div class="t" style="left:1053.0px;top:383.6px;width:60px;text-align:center;font-size:10.4px;color:#fff;text-shadow:0 0 1px #000,0 0 1px #000,0 0 2px #000">0.3%</div>
<div class="t" style="left:1065.1px;top:400.1px;width:60px;text-align:center;font-size:10.4px;color:#fff;text-shadow:0 0 1px #000,0 0 1px #000,0 0 2px #000">5.9%</div>
<div class="t" style="left:1074.0px;top:419.4px;width:60px;text-align:center;font-size:10.4px;color:#fff;text-shadow:0 0 1px #000,0 0 1px #000,0 0 2px #000">0.5%</div>
<div class="t" style="left:1074.7px;top:421.6px;width:60px;text-align:center;font-size:10.4px;color:#fff;text-shadow:0 0 1px #000,0 0 1px #000,0 0 2px #000">0.2%</div>
<div class="t" style="left:1075.5px;top:424.1px;width:60px;text-align:center;font-size:10.4px;color:#fff;text-shadow:0 0 1px #000,0 0 1px #000,0 0 2px #000">0.6%</div>
<div class="t" style="left:1076.4px;top:427.3px;width:60px;text-align:center;font-size:10.4px;color:#fff;text-shadow:0 0 1px #000,0 0 1px #000,0 0 2px #000">0.4%</div>
<div class="t" style="left:930.2px;top:549.8px;width:60px;text-align:center;font-size:10.4px;color:#fff;text-shadow:0 0 1px #000,0 0 1px #000,0 0 2px #000">72.8%</div>
<div class="t" style="left:937.5px;top:356.8px;width:60px;text-align:center;font-size:10.4px;color:#fff;text-shadow:0 0 1px #000,0 0 1px #000,0 0 2px #000">0.1%</div>
<div class="t" style="left:944.0px;top:354.3px;width:60px;text-align:center;font-size:10.4px;color:#fff;text-shadow:0 0 1px #000,0 0 1px #000,0 0 2px #000">2.0%</div>
<div class="t" style="left:950.6px;top:352.3px;width:60px;text-align:center;font-size:10.4px;color:#fff;text-shadow:0 0 1px #000,0 0 1px #000,0 0 2px #000">0.1%</div>
<div class="t" style="left:952.9px;top:351.7px;width:60px;text-align:center;font-size:10.4px;color:#fff;text-shadow:0 0 1px #000,0 0 1px #000,0 0 2px #000">0.6%</div>
<div class="t" style="left:955.3px;top:351.2px;width:60px;text-align:center;font-size:10.4px;color:#fff;text-shadow:0 0 1px #000,0 0 1px #000,0 0 2px #000">0.1%</div>
<div class="t" style="left:959.9px;top:350.3px;width:60px;text-align:center;font-size:10.4px;color:#fff;text-shadow:0 0 1px #000,0 0 1px #000,0 0 2px #000">1.3%</div>
<div class="t" style="left:964.6px;top:349.7px;width:60px;text-align:center;font-size:10.4px;color:#fff;text-shadow:0 0 1px #000,0 0 1px #000,0 0 2px #000">0.2%</div>
<div class="t" style="left:967.8px;top:349.3px;width:60px;text-align:center;font-size:10.4px;color:#fff;text-shadow:0 0 1px #000,0 0 1px #000,0 0 2px #000">0.8%</div>
<div class="t" style="left:973.4px;top:349.0px;width:60px;text-align:center;font-size:10.4px;color:#fff;text-shadow:0 0 1px #000,0 0 1px #000,0 0 2px #000">0.9%</div>
<div class="a" style="left:1150px;top:318px;width:100px;height:287.5px;overflow:hidden">
<div class="a" style="left:-1150px;top:-318px;width:1500px;height:844px">
<div class="a" style="left:1162.9px;top:321.20px;width:10.4px;height:10.4px;border-radius:50%;background:#2196f3"></div>
<div class="t" style="left:1176.20px;top:322.36px;font-size:10.87px;font-weight:normal;color:#4e4e4e;transform-origin:0 0;transform:scaleX(0.9384);">Albania</div>
<div class="a" style="left:1162.9px;top:335.80px;width:10.4px;height:10.4px;border-radius:50%;background:#4caf50"></div>
<div class="t" style="left:1176.20px;top:336.96px;font-size:10.87px;font-weight:normal;color:#4e4e4e;transform-origin:0 0;transform:scaleX(0.9384);">Argentina</div>
<div class="a" style="left:1162.9px;top:350.40px;width:10.4px;height:10.4px;border-radius:50%;background:#ff9800"></div>
<div class="t" style="left:1176.20px;top:351.56px;font-size:10.87px;font-weight:normal;color:#4e4e4e;transform-origin:0 0;transform:scaleX(0.9384);">Austria</div>
<div class="a" style="left:1162.9px;top:365.00px;width:10.4px;height:10.4px;border-radius:50%;background:#f44336"></div>
<div class="t" style="left:1176.20px;top:366.16px;font-size:10.87px;font-weight:normal;color:#4e4e4e;transform-origin:0 0;transform:scaleX(0.9384);">Australia</div>
<div class="a" style="left:1162.9px;top:379.60px;width:10.4px;height:10.4px;border-radius:50%;background:#009688"></div>
<div class="t" style="left:1175.38px;top:380.76px;font-size:10.87px;font-weight:normal;color:#4e4e4e;transform-origin:0 0;transform:scaleX(0.9384);">Belgio</div>
<div class="a" style="left:1162.9px;top:394.20px;width:10.4px;height:10.4px;border-radius:50%;background:#2196f3"></div>
<div class="t" style="left:1175.38px;top:395.36px;font-size:10.87px;font-weight:normal;color:#4e4e4e;transform-origin:0 0;transform:scaleX(0.9384);">Bulgaria</div>
<div class="a" style="left:1162.9px;top:408.80px;width:10.4px;height:10.4px;border-radius:50%;background:#4caf50"></div>
<div class="t" style="left:1175.38px;top:409.96px;font-size:10.87px;font-weight:normal;color:#4e4e4e;transform-origin:0 0;transform:scaleX(0.9384);">Brasile</div>
<div class="a" style="left:1162.9px;top:423.40px;width:10.4px;height:10.4px;border-radius:50%;background:#ff9800"></div>
<div class="t" style="left:1175.69px;top:424.56px;font-size:10.87px;font-weight:normal;color:#4e4e4e;transform-origin:0 0;transform:scaleX(0.9384);">Canada</div>
<div class="a" style="left:1162.9px;top:438.00px;width:10.4px;height:10.4px;border-radius:50%;background:#f44336"></div>
<div class="t" style="left:1175.74px;top:439.16px;font-size:10.87px;font-weight:normal;color:#4e4e4e;transform-origin:0 0;transform:scaleX(0.9384);">Svizzera</div>
<div class="a" style="left:1162.9px;top:452.60px;width:10.4px;height:10.4px;border-radius:50%;background:#009688"></div>
<div class="t" style="left:1175.69px;top:453.76px;font-size:10.87px;font-weight:normal;color:#4e4e4e;transform-origin:0 0;transform:scaleX(0.9384);">Cina</div>
<div class="a" style="left:1162.9px;top:467.20px;width:10.4px;height:10.4px;border-radius:50%;background:#2196f3"></div>
<div class="t" style="left:1175.69px;top:468.36px;font-size:10.87px;font-weight:normal;color:#4e4e4e;transform-origin:0 0;transform:scaleX(0.9384);">Colombia</div>
<div class="a" style="left:1162.9px;top:481.80px;width:10.4px;height:10.4px;border-radius:50%;background:#4caf50"></div>
<div class="t" style="left:1175.69px;top:482.96px;font-size:10.87px;font-weight:normal;color:#4e4e4e;transform-origin:0 0;transform:scaleX(0.9384);">Costa Rica</div>
<div class="a" style="left:1162.9px;top:496.40px;width:10.4px;height:10.4px;border-radius:50%;background:#ff9800"></div>
<div class="t" style="left:1175.38px;top:497.56px;font-size:10.87px;font-weight:normal;color:#4e4e4e;transform-origin:0 0;transform:scaleX(0.9384);">Rep. Ceca</div>
<div class="a" style="left:1162.9px;top:511.00px;width:10.4px;height:10.4px;border-radius:50%;background:#f44336"></div>
<div class="t" style="left:1175.69px;top:512.16px;font-size:10.87px;font-weight:normal;color:#4e4e4e;transform-origin:0 0;transform:scaleX(0.9384);">Germania</div>
<div class="a" style="left:1162.9px;top:525.60px;width:10.4px;height:10.4px;border-radius:50%;background:#009688"></div>
<div class="t" style="left:1175.38px;top:526.76px;font-size:10.87px;font-weight:normal;color:#4e4e4e;transform-origin:0 0;transform:scaleX(0.9384);">Danimarca</div>
<div class="a" style="left:1162.9px;top:540.20px;width:10.4px;height:10.4px;border-radius:50%;background:#2196f3"></div>
<div class="t" style="left:1175.38px;top:541.36px;font-size:10.87px;font-weight:normal;color:#4e4e4e;transform-origin:0 0;transform:scaleX(0.9384);">Egitto</div>
<div class="a" style="left:1162.9px;top:554.80px;width:10.4px;height:10.4px;border-radius:50%;background:#4caf50"></div>
<div class="t" style="left:1175.74px;top:555.96px;font-size:10.87px;font-weight:normal;color:#4e4e4e;transform-origin:0 0;transform:scaleX(0.9384);">Spagna</div>
<div class="a" style="left:1162.9px;top:569.40px;width:10.4px;height:10.4px;border-radius:50%;background:#ff9800"></div>
<div class="t" style="left:1175.38px;top:570.56px;font-size:10.87px;font-weight:normal;color:#4e4e4e;transform-origin:0 0;transform:scaleX(0.9384);">Etiopia</div>
<div class="a" style="left:1162.9px;top:584.00px;width:10.4px;height:10.4px;border-radius:50%;background:#f44336"></div>
<div class="t" style="left:1175.38px;top:585.16px;font-size:10.87px;font-weight:normal;color:#4e4e4e;transform-origin:0 0;transform:scaleX(0.9384);">Finlandia</div>
<div class="a" style="left:1162.9px;top:598.60px;width:10.4px;height:10.4px;border-radius:50%;background:#009688"></div>
<div class="t" style="left:1175.38px;top:599.76px;font-size:10.87px;font-weight:normal;color:#4e4e4e;transform-origin:0 0;transform:scaleX(0.9384);">Francia</div>
</div></div>
<div class="a" style="left:1257.6px;top:320.3px;width:4.8px;height:109.2px;border-radius:2.4px;background:#8c8c8c"></div>
<div class="a" style="left:1275px;top:234.7px;width:50px;height:318.3px;background:#fff;border:1px solid #e2e4e6;border-radius:3px 0 0 3px;box-shadow:0 0 3px rgba(0,0,0,.06)"></div>
<div class="a" style="left:1276px;top:497.5px;width:41px;height:1px;background:#e0e0e0"></div>
 
<svg class="a" style="left:1281.9px;top:242px" width="27.5" height="28" viewBox="0 0 28 28">
 <defs><linearGradient id="gsky" x1="0" y1="0" x2="0" y2="1"><stop offset="0" stop-color="#3e8ef7"/><stop offset="1" stop-color="#1f5fd6"/></linearGradient>
 <linearGradient id="gmt" x1="0" y1="0" x2="0" y2="1"><stop offset="0" stop-color="#5fd38a"/><stop offset="1" stop-color="#2fb36a"/></linearGradient></defs>
 <rect x="0" y="0" width="28" height="28" rx="5" fill="url(#gsky)"/>
 <circle cx="19" cy="7.5" r="3.3" fill="#ffc928"/>
 <path d="M0 22 L7.5 13.5 L13 19 L18 15 L28 21 V23 a5 5 0 0 1 -5 5 H5 a5 5 0 0 1 -5 -5 Z" fill="url(#gmt)"/>
</svg>
<svg class="a" style="left:1278px;top:276px" width="36" height="42" viewBox="0 0 36 42">
 <path d="M6,6.8 L9,13.2 H26.5 L29.3,6.8 L26,8.5 L24.5,5 L21,7.5 L17.6,4.5 L14.2,7.5 L10.8,5 L9.5,8.5 Z" fill="#d6a52c"/>
 <rect x="10.7" y="11.4" width="13.2" height="1.9" rx="0.9" fill="#e8202a"/>
 <path d="M5.7,14.4 H29.4 V33.5 L17.5,35 L5.7,33.5 Z" fill="#d4a537"/>
 <path d="M17.2,14.4 H29.4 V33.5 L17.5,35 L17.2,35 Z" fill="#d81b3c"/>
 <rect x="8.2" y="15.9" width="6.7" height="6" fill="#f4f1ea"/>
 <rect x="5.7" y="23.4" width="11.7" height="3.2" fill="#2a9fe0"/>
 <rect x="8" y="27.9" width="2.2" height="1.5" fill="#e63030"/><rect x="13.4" y="27.9" width="2.5" height="1.5" fill="#e63030"/>
 <path d="M8.5,33 L15,29 M8.5,29 L15,33" stroke="#9a9a9a" stroke-width="1"/>
 <path d="M20,19 C23,18.5 25,20 24,23 C26,24.5 25.5,28 23,29.5 L21,32 M21.5,24 L19,26.5" stroke="#d8b03a" stroke-width="2" fill="none" stroke-linecap="round"/>
 <path d="M3.5,33 C8,38.5 27,38.5 31.5,33" stroke="#d6a52c" stroke-width="2.2" fill="none" stroke-linecap="round"/>
</svg>
<svg class="a" style="left:1278px;top:322px" width="36" height="76" viewBox="0 0 36 76">
 <path d="M3.5,9 L14.3,5.4 Q16,5.2 16,7 V26.8 Q16,28 14.5,28.2 L3.2,29 Z" fill="#a51c3a"/>
 <path d="M18.9,7 Q18.9,5.2 20.6,5.4 L31.8,9 V28.8 L20.3,28.2 Q18.9,28 18.9,26.8 Z" fill="#e01b1b"/>
 <rect x="5" y="45" width="6.7" height="5.9" rx="0.6" fill="#f7a1b0"/>
 <rect x="5" y="51.8" width="6.7" height="5.9" rx="0.3" fill="#f0606a"/>
 <rect x="5" y="59" width="6.7" height="5.9" rx="0.3" fill="#d81b3c"/>
 <rect x="5" y="65.8" width="6.7" height="6.2" rx="0.3" fill="#c8c8c8"/>
 <g transform="rotate(28 12 72)"><rect x="10.5" y="47" width="7" height="6.5" rx="0.8" fill="#ffc107"/><rect x="10.5" y="54.5" width="7" height="6.5" fill="#ffc107"/><rect x="10.5" y="62" width="7" height="6" fill="#ff8a3d"/></g>
 <g transform="rotate(58 12 72)"><rect x="12" y="48.5" width="7" height="6.5" rx="0.8" fill="#3ecf7e"/><rect x="12" y="56" width="7" height="6.5" fill="#2fb56a"/><rect x="12" y="63.5" width="7" height="5" fill="#1f8a5a"/></g>
 <rect x="11.7" y="65.8" width="5.4" height="6.2" fill="#1e3a5f"/>
 <rect x="18.9" y="65.8" width="5.4" height="6.2" fill="#1565c0"/>
 <rect x="26.1" y="65.8" width="5" height="6.2" rx="0.6" fill="#64b5f6"/>
</svg>
<svg class="a" style="left:1282px;top:407px" width="27" height="30" viewBox="0 0 27 30">
 <defs><linearGradient id="gbell" x1="0" y1="0" x2="1" y2="0"><stop offset="0" stop-color="#d9a52a"/><stop offset="0.35" stop-color="#f7cf6e"/><stop offset="0.7" stop-color="#eec25a"/><stop offset="1" stop-color="#c99420"/></linearGradient></defs>
 <circle cx="13" cy="1.8" r="1.4" fill="#d8a430"/>
 <path d="M13 2.2 C8.2 2.2 6.6 6 6.4 11 C6.2 17 6 21 3.5 23.5 C2 25 1.2 25.6 1 26.3 H25.6 C25.4 25.6 24.6 25 23 23.5 C20.5 21 20.3 17 20.1 11 C19.9 6 18.3 2.2 13 2.2 Z" fill="url(#gbell)"/>
 <path d="M10.6 26.5 A2.7 2.7 0 0 0 15.8 26.5 Z" fill="#d29a22"/>
 <path d="M1 26.3 H25.6 V27 H1 Z" fill="#c9962a"/>
</svg>
<div class="a" style="left:1295.4px;top:402.1px;width:20.4px;height:20.4px;border-radius:50%;background:#ee0f16"></div>

<div class="t" style="left:1295.42px;top:407.17px;font-size:9.57px;font-weight:bold;color:#fff;transform-origin:0 0;transform:scaleX(1.2455);">+99</div>

<div class="a" style="left:1279px;top:447px;width:32.6px;height:32.6px;border-radius:50%;background:#e9f1fc"></div>
<svg class="a" style="left:1279px;top:447px" width="33" height="33" viewBox="0 0 33 33" fill="none" stroke="#3d95f0" stroke-width="4" stroke-linecap="round"><path d="M11.2 10.6 A9 9 0 1 0 21.6 10.6"/><path d="M16.4 5.6 V12.4"/></svg>
<svg class="a" style="left:1282.5px;top:520px" width="25.2" height="26.4" viewBox="0 0 25 26">
 <rect x="0" y="0" width="15" height="26" fill="#b8dcf8"/>
 <rect x="15" y="0" width="10" height="26" fill="#3d4f5c"/>
 <path d="M16.5 3h7M16.5 7h7M16.5 11h7M16.5 15h7M16.5 19h7M16.5 23h7" stroke="#5a6d7a" stroke-width="1"/>
 <path d="M3 13h9M8.5 9.5l3.5 3.5l-3.5 3.5" stroke="#1f8be0" stroke-width="2.4" fill="none" stroke-linecap="round" stroke-linejoin="round"/>
</svg>


<div class="a" style="left:199.6px;top:677.2px;width:50.6px;height:51px;border-radius:50%;background:#053a6b;box-shadow:0 1px 3px rgba(0,0,0,.25)"></div>
<svg class="a" style="left:199.7px;top:677.6px" width="51" height="51" viewBox="0 0 51 51">
 <circle cx="25.3" cy="24.7" r="12" fill="#fff"/>
 <path d="M17 32 L20.5 39.2 L27 36.2 Z" fill="#fff"/>
 <path d="M24.1,30.3 H32.6 A4.25,2.9 0 0 1 24.1,30.3 Z" fill="#053a6b"/>
</svg>

</div></div>

<div class="a" style="left:688.7px;top:17px;width:122.6px;height:22.5px;background:#050505;border-radius:0 0 6px 6px"></div>
<div class="a" style="left:683px;top:18px;width:6px;height:6px;background:radial-gradient(circle at 0 100%,rgba(0,0,0,0) 5.5px,#050505 6px)"></div>
<div class="a" style="left:811px;top:18px;width:6px;height:6px;background:radial-gradient(circle at 100% 100%,rgba(0,0,0,0) 5.5px,#050505 6px)"></div>
<div class="a" style="left:745px;top:21px;width:10px;height:10px;border-radius:50%;background:radial-gradient(circle,#1a1a1a 0,#0d0d0d 40%,#1c1c1c 70%,#070707 100%)"></div>

</body></html>
